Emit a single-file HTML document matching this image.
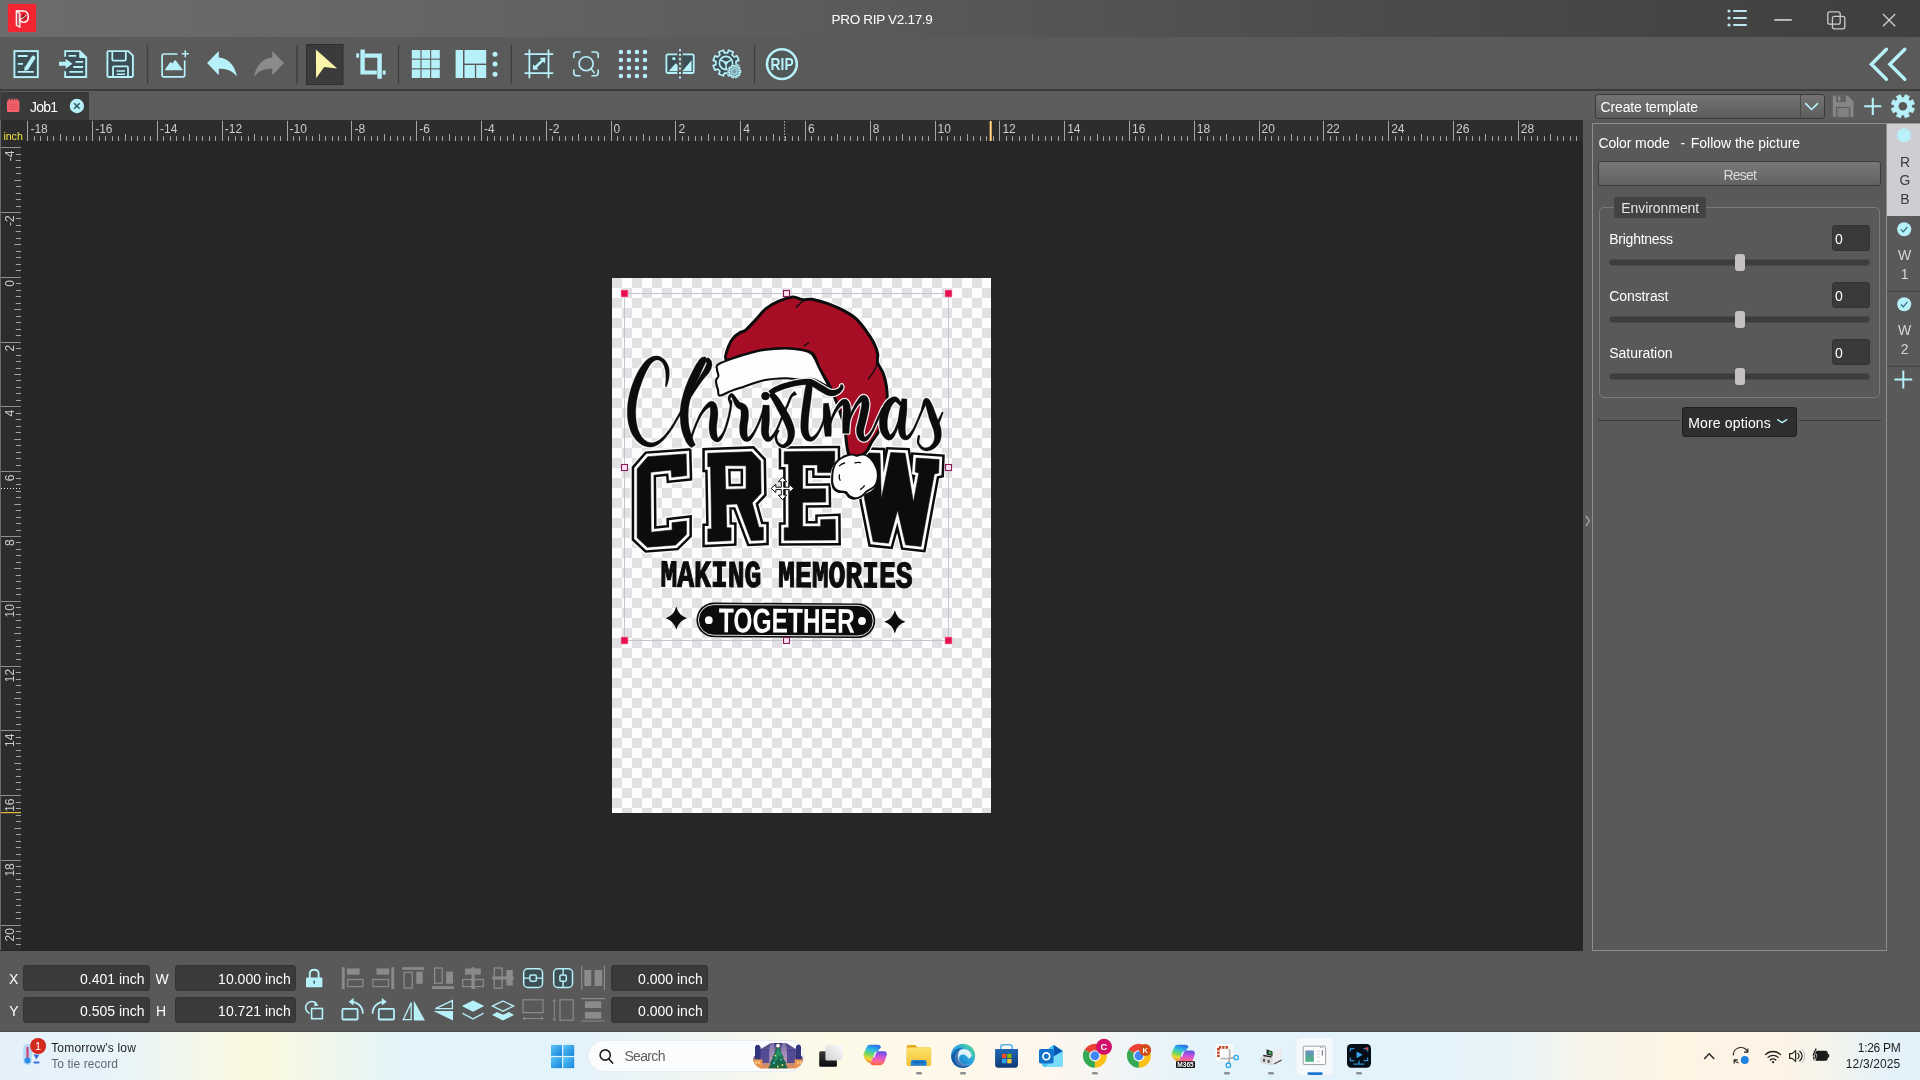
<!DOCTYPE html>
<html><head><meta charset="utf-8"><title>PRO RIP V2.17.9</title>
<style>
*{box-sizing:border-box;margin:0;padding:0}
html,body{width:1920px;height:1080px;overflow:hidden;background:#262626;font-family:"Liberation Sans",sans-serif;color:#fff}
.abs{position:absolute}
#titlebar{position:absolute;left:0;top:0;width:1920px;height:37px;background:linear-gradient(90deg,#6c6c6c 0%,#666 20%,#5a5a5a 45%,#4c4c4c 70%,#3f3f3f 100%)}
#toolbar{position:absolute;left:0;top:37px;width:1920px;height:54px;background:#5a5a5a}
#tbline{position:absolute;left:0;top:89.3px;width:1920px;height:1.5px;background:#3c3c3c}
#tabbar{position:absolute;left:0;top:91px;width:1920px;height:29px;background:#5d5d5d}
#canvas{position:absolute;left:0;top:120px;width:1583.8px;height:830.6px;background:#262626}
#panelbg{position:absolute;left:1583px;top:120px;width:337px;height:832px;background:#595959}
#bottom{position:absolute;left:0;top:950.6px;width:1920px;height:81.4px;background:#595959}
#taskbar{position:absolute;left:0;top:1032px;width:1920px;height:48px;background:linear-gradient(90deg,#e4f1fa 0%,#e8f4fa 6%,#f6f8e8 11%,#fbf9de 13.5%,#f0f7ec 17%,#e2f4f9 21%,#e3f3fb 30%,#f4f7f0 38%,#fdfae8 43%,#fef8ea 50%,#fdf6ee 55%,#eff5f7 59%,#e2f3fb 63%,#e4f3fb 75%,#eaf4f7 79%,#f8f5ea 83%,#fdf4e4 87%,#fdf4e6 93%,#f0f4f0 96%,#e3f2fa 98.5%,#e2f2fa 100%)}

#root{position:absolute;left:0;top:0;width:1920px;height:1080px;will-change:transform}

</style></head><body>
<div id="root">
<!-- titlebar -->
<div id="titlebar"></div>
<div class="abs" style="left:8px;top:4px;width:28px;height:28px;background:#f42533;box-shadow:0 0 1px #f0505a"></div>
<svg class="abs" style="left:8px;top:4px;" width="28" height="28" viewBox="0 0 28 28"><path d="M8.3 7 L8.3 21.2 L11.9 23.3 L11.9 9.4 Z" fill="#c4606a" stroke="#fff" stroke-width="1.2" stroke-linejoin="round"/><path d="M8.3 7 H15.2 Q20.3 7.1 20.3 12.7 Q20.3 18.3 15.4 18.3 Q12.6 18.3 11.9 15.6" fill="none" stroke="#fff" stroke-width="1.4" stroke-linecap="round"/><path d="M13.4 13.6 Q13.2 9.6 16.6 9.9 Q18.6 10.6 18.3 13 Q17.6 16.6 14.6 16.3 Z" fill="#9a1a26"/><path d="M12.2 15.2 Q16 14.6 18.6 10.6" stroke="#fff" stroke-width="1" fill="none"/></svg>
<div class="abs" style="left:831.50px;top:10.90px;font-size:13.5px;line-height:18px;color:#fff;white-space:pre;letter-spacing:-0.304px;">PRO RIP V2.17.9</div>
<svg class="abs" style="left:1700px;top:0px;" width="220" height="37" viewBox="1700 0 220 37"><circle cx="1729" cy="11" r="1.6" fill="#bde6f0"/><rect x="1733" y="10" width="14" height="2" rx="1" fill="#bde6f0"/><circle cx="1729" cy="18" r="1.6" fill="#bde6f0"/><rect x="1733" y="17" width="14" height="2" rx="1" fill="#bde6f0"/><circle cx="1729" cy="25" r="1.6" fill="#bde6f0"/><rect x="1733" y="24" width="14" height="2" rx="1" fill="#bde6f0"/><rect x="1774.3" y="19" width="17.5" height="1.8" fill="#c4c4c4"/><rect x="1827.8" y="11.8" width="12.4" height="12.4" rx="2" fill="none" stroke="#cacaca" stroke-width="1.3"/><rect x="1832.4" y="16.4" width="12.4" height="12.4" rx="2" fill="none" stroke="#cacaca" stroke-width="1.3"/><path d="M1883 14 L1895.2 26.2 M1895.2 14 L1883 26.2" stroke="#d0d0d0" stroke-width="1.3" fill="none"/></svg>
<!-- toolbar -->
<div id="toolbar"></div><div id="tbline"></div>
<svg class="abs" style="left:0px;top:37px;" width="1920" height="54" viewBox="0 37 1920 54"><rect x="146.9" y="45" width="1.3" height="39" fill="#3d3d3d"/><rect x="296.4" y="45" width="1.3" height="39" fill="#3d3d3d"/><rect x="397.79999999999995" y="45" width="1.3" height="39" fill="#3d3d3d"/><rect x="510.7" y="45" width="1.3" height="39" fill="#3d3d3d"/><rect x="753.8" y="45" width="1.3" height="39" fill="#3d3d3d"/><rect x="306.5" y="44.5" width="36.5" height="40" fill="#3b3b3b" stroke="#2f2f2f" stroke-width="1"/><rect x="14.4" y="51.1" width="23.4" height="26" fill="#3d4f54" stroke="#b6f1fa" stroke-width="1.9"/><path d="M17.8 56 H27.6 M17.8 63.8 H23 M17.8 71.9 H33.9" stroke="#b6f1fa" stroke-width="1.8" fill="none"/><path d="M33.4 57.6 L26.6 68.4" stroke="#b6f1fa" stroke-width="4" stroke-linecap="round" fill="none"/><path d="M24.6 66.6 L28.3 69 L24.4 71.2 Z" fill="#b6f1fa"/><path d="M65.2 56.8 V51.1 H79.8 L86.2 57.5 V77 H65.2 V71.3" fill="#3d4f54" stroke="#b6f1fa" stroke-width="1.9" stroke-linejoin="miter"/><path d="M79.8 51.1 V57.5 H86.2" fill="#b6f1fa" stroke="#b6f1fa" stroke-width="1" /><path d="M59 61.8 H65.6 V58.8 L72.4 63.8 L65.6 68.8 V65.8 H59 Z" fill="#b6f1fa"/><path d="M68.5 55.8 H76.2 M75.5 61.9 H83.1 M73.3 67 H83.1 M69.3 71.9 H83.1" stroke="#b6f1fa" stroke-width="1.8" fill="none"/><path d="M108.6 51.1 H128.3 L132.9 55.7 V75.8 Q132.9 77 131.7 77 H108.6 Q107.4 77 107.4 75.8 V52.3 Q107.4 51.1 108.6 51.1 Z" fill="#3d4f54" stroke="#b6f1fa" stroke-width="1.9"/><path d="M112.3 51.1 V59.6 Q112.3 60.6 113.3 60.6 H124.8 Q125.8 60.6 125.8 59.6 V51.1" fill="none" stroke="#b6f1fa" stroke-width="1.8"/><path d="M113 77 V67.4 Q113 66.4 114 66.4 H127 Q128 66.4 128 67.4 V77" fill="none" stroke="#b6f1fa" stroke-width="1.8"/><path d="M116.6 71.1 H125 M116.6 74.3 H125" stroke="#b6f1fa" stroke-width="1.5" fill="none"/><path d="M176.9 54 H164 Q162.1 54 162.1 55.9 V74.9 Q162.1 76.8 164 76.8 H182.8 Q184.7 76.8 184.7 74.9 V61.1" fill="none" stroke="#b6f1fa" stroke-width="1.7" stroke-linecap="round"/><path d="M181.8 53.7 H188.8 M185.3 50.2 V57.2" stroke="#b6f1fa" stroke-width="1.5" fill="none"/><path d="M165.6 70.3 Q164.4 70.3 165.2 69.2 L170 62.6 Q170.7 61.8 171.6 62.6 L172.5 63.4 L174.4 60.6 Q175.1 59.8 175.8 60.6 L182.4 69.2 Q183.2 70.3 182 70.3 Z" fill="#b6f1fa"/><path d="M207.1 63.1 L218.8 50.9 L218.8 57.5 C228.5 58 235.3 66 236.9 76.6 C232 70.4 226 68.8 218.8 68.8 L218.8 75.2 Z" fill="#b6f1fa"/><path d="M284 63.1 L272.3 50.9 L272.3 57.5 C262.6 58 255.8 66 254.2 76.6 C259.1 70.4 265.1 68.8 272.3 68.8 L272.3 75.2 Z" fill="#8b8b8b"/><path d="M315.9 49.6 L337.2 68.6 L324.2 67.1 L316.1 78.3 Z" fill="#fbf5aa"/><path d="M360.4 49.4 H364.8 V70.5 H376.8 V74.6 H360.4 Z" fill="#b6f1fa"/><path d="M364.8 53.4 H381.8 V78.8 H377.3 V57.7 H364.8 Z" fill="#b6f1fa"/><rect x="356.2" y="53.4" width="2.9" height="4.3" fill="#b6f1fa"/><rect x="382.7" y="70.5" width="3" height="4.1" fill="#b6f1fa"/><rect x="411.8" y="50.0" width="8.6" height="8.6" fill="#b6f1fa"/><rect x="421.5" y="50.0" width="8.6" height="8.6" fill="#b6f1fa"/><rect x="431.2" y="50.0" width="8.6" height="8.6" fill="#b6f1fa"/><rect x="411.8" y="59.7" width="8.6" height="8.6" fill="#b6f1fa"/><rect x="421.5" y="59.7" width="8.6" height="8.6" fill="#b6f1fa"/><rect x="431.2" y="59.7" width="8.6" height="8.6" fill="#b6f1fa"/><rect x="411.8" y="69.4" width="8.6" height="8.6" fill="#b6f1fa"/><rect x="421.5" y="69.4" width="8.6" height="8.6" fill="#b6f1fa"/><rect x="431.2" y="69.4" width="8.6" height="8.6" fill="#b6f1fa"/><rect x="455.6" y="50" width="7.4" height="28" fill="#b6f1fa"/><rect x="464.5" y="50" width="21.7" height="13.6" fill="#b6f1fa"/><rect x="464.5" y="65" width="10.4" height="13" fill="#b6f1fa"/><rect x="476.2" y="65" width="10" height="13" fill="#b6f1fa"/><circle cx="495" cy="54.3" r="2.5" fill="#b6f1fa"/><circle cx="495" cy="64" r="2.5" fill="#b6f1fa"/><circle cx="495" cy="74.2" r="2.5" fill="#b6f1fa"/><rect x="529.4" y="54.2" width="19.1" height="19" fill="#3d4f54" fill-opacity="0.55"/><path d="M529.4 50.2 V77.6 M548.5 50.2 V77.6 M525.2 54.2 H552.6 M525.2 73.2 H552.6" stroke="#b6f1fa" stroke-width="1.8" stroke-linecap="round" fill="none"/><path d="M535.5 67.2 L542.6 60.4" stroke="#b6f1fa" stroke-width="2.6" fill="none"/><path d="M545.4 57.6 L545 63.4 L539.6 58 Z M532.8 69.8 L533.2 64.2 L538.6 69.6 Z" fill="#b6f1fa"/><path d="M573.8 57.5 V55 Q573.8 52 576.8 52 H580 M592 52 H595.2 Q598.2 52 598.2 55 V57.5 M598.2 70 V72.7 Q598.2 75.7 595.2 75.7 H592 M580 75.7 H576.8 Q573.8 75.7 573.8 72.7 V70" stroke="#b6f1fa" stroke-width="1.6" fill="none" stroke-linecap="round"/><circle cx="586.1" cy="63.7" r="7" fill="#3d4f54" fill-opacity="0.12" stroke="#b6f1fa" stroke-width="1.6"/><path d="M591.1 68.8 L594.3 72.9" stroke="#b6f1fa" stroke-width="1.5" stroke-linecap="round"/><circle cx="620.90" cy="52.00" r="2.25" fill="#b6f1fa"/><circle cx="628.93" cy="52.00" r="2.25" fill="#b6f1fa"/><circle cx="636.96" cy="52.00" r="2.25" fill="#b6f1fa"/><circle cx="644.99" cy="52.00" r="2.25" fill="#b6f1fa"/><circle cx="620.90" cy="59.97" r="2.25" fill="#b6f1fa"/><circle cx="628.93" cy="59.97" r="2.25" fill="#b6f1fa"/><circle cx="636.96" cy="59.97" r="2.25" fill="#b6f1fa"/><circle cx="644.99" cy="59.97" r="2.25" fill="#b6f1fa"/><circle cx="620.90" cy="67.94" r="2.25" fill="#b6f1fa"/><circle cx="628.93" cy="67.94" r="2.25" fill="#b6f1fa"/><circle cx="636.96" cy="67.94" r="2.25" fill="#b6f1fa"/><circle cx="644.99" cy="67.94" r="2.25" fill="#b6f1fa"/><circle cx="620.90" cy="75.91" r="2.25" fill="#b6f1fa"/><circle cx="628.93" cy="75.91" r="2.25" fill="#b6f1fa"/><circle cx="636.96" cy="75.91" r="2.25" fill="#b6f1fa"/><circle cx="644.99" cy="75.91" r="2.25" fill="#b6f1fa"/><path d="M677.3 54.4 H668 Q666.4 54.4 666.4 56 V71.4 Q666.4 73 668 73 H677.3 M682.7 54.4 H692.1 Q693.7 54.4 693.7 56 V71.4 Q693.7 73 692.1 73 H682.7" fill="#3d4f54" stroke="#b6f1fa" stroke-width="1.8"/><path d="M668.6 71.3 L675.7 63.2 L677.6 65.3 V71.3 Z M682.2 71.3 L691.6 60.2 V71.3 Z" fill="#b6f1fa"/><circle cx="673.9" cy="58.6" r="1.7" fill="#b6f1fa"/><path d="M680 49.2 V78.6" stroke="#b6f1fa" stroke-width="2" stroke-dasharray="2 2.55" fill="none"/><path d="M738.83 65.66 L736.95 70.19 L734.25 69.00 L732.00 71.25 L733.19 73.95 L728.66 75.83 L727.60 73.07 L724.40 73.07 L723.34 75.83 L718.81 73.95 L720.00 71.25 L717.75 69.00 L715.05 70.19 L713.17 65.66 L715.93 64.60 L715.93 61.40 L713.17 60.34 L715.05 55.81 L717.75 57.00 L720.00 54.75 L718.81 52.05 L723.34 50.17 L724.40 52.93 L727.60 52.93 L728.66 50.17 L733.19 52.05 L732.00 54.75 L734.25 57.00 L736.95 55.81 L738.83 60.34 L736.07 61.40 L736.07 64.60Z" fill="#3d4f54" stroke="#b6f1fa" stroke-width="1.7" stroke-linejoin="round"/><circle cx="726" cy="63" r="6.6" fill="none" stroke="#b6f1fa" stroke-width="1.6"/><circle cx="726" cy="63" r="1.7" fill="#b6f1fa"/><path d="M726 63 L726 69.6 M726 63 L720.4 59.6 M726 63 L731.6 59.6" stroke="#b6f1fa" stroke-width="1.5" fill="none"/><circle cx="734.4" cy="71.4" r="7.2" fill="#5a5a5a"/><path d="M740.72 70.40 L740.72 72.40 L739.21 72.35 L738.85 73.46 L740.10 74.31 L738.93 75.93 L737.73 74.99 L736.79 75.68 L737.31 77.10 L735.40 77.72 L734.98 76.27 L733.82 76.27 L733.40 77.72 L731.49 77.10 L732.01 75.68 L731.07 74.99 L729.87 75.93 L728.70 74.31 L729.95 73.46 L729.59 72.35 L728.08 72.40 L728.08 70.40 L729.59 70.45 L729.95 69.34 L728.70 68.49 L729.87 66.87 L731.07 67.81 L732.01 67.12 L731.49 65.70 L733.40 65.08 L733.82 66.53 L734.98 66.53 L735.40 65.08 L737.31 65.70 L736.79 67.12 L737.73 67.81 L738.93 66.87 L740.10 68.49 L738.85 69.34 L739.21 70.45Z" fill="#74a0a8" stroke="#b6f1fa" stroke-width="1.2" stroke-linejoin="round"/><circle cx="734.4" cy="71.4" r="2.8" fill="none" stroke="#b6f1fa" stroke-width="1"/><circle cx="781.9" cy="64.1" r="14.9" fill="#3d4f54" fill-opacity="0.25" stroke="#b6f1fa" stroke-width="2.6"/><text x="782.1" y="69.9" font-family="Liberation Sans" font-weight="bold" font-size="16.2" fill="#b6f1fa" text-anchor="middle" textLength="23" lengthAdjust="spacingAndGlyphs">RIP</text><path d="M1886.4 49.2 L1871.4 64.2 L1886.4 79.2 M1904.8 49.2 L1889.8 64.2 L1904.8 79.2" stroke="#b6f1fa" stroke-width="3.4" stroke-linecap="round" stroke-linejoin="miter" fill="none"/></svg>
<!-- tabs -->
<div id="tabbar"></div>
<div class="abs" style="left:1px;top:92px;width:88px;height:28px;background:#3a3a3a;"></div>
<div class="abs" style="left:0px;top:91px;width:1px;height:29px;background:#444;"></div>
<svg class="abs" style="left:0px;top:91px;" width="100" height="30" viewBox="0 91 100 30"><rect x="7" y="100.2" width="12.4" height="11.8" rx="1.6" fill="#f0626b"/><rect x="8.5" y="98.6" width="1.4" height="3" rx="0.6" fill="#f0626b"/><rect x="11.200000000000001" y="98.6" width="1.4" height="3" rx="0.6" fill="#f0626b"/><rect x="13.9" y="98.6" width="1.4" height="3" rx="0.6" fill="#f0626b"/><rect x="16.6" y="98.6" width="1.4" height="3" rx="0.6" fill="#f0626b"/><path d="M9 104.2 H17.4 M9 106.6 H17.4 M9 109 H17.4" stroke="#e24852" stroke-width="0.9" fill="none"/><circle cx="76.9" cy="106" r="7.2" fill="#b6f1fa"/><path d="M74.1 103.2 L79.7 108.8 M79.7 103.2 L74.1 108.8" stroke="#2c5560" stroke-width="1.5" fill="none"/></svg>
<div class="abs" style="left:30.00px;top:97.60px;font-size:14px;line-height:18px;color:#fff;white-space:pre;letter-spacing:-0.790px;">Job1</div>
<!-- canvas -->
<div id="canvas"></div>
<div class="abs" style="left:612px;top:278px;width:379px;height:535px;background-color:#fdfcfe;background-image:conic-gradient(#e1e0e3 25%,transparent 0 50%,#e1e0e3 0 75%,transparent 0);background-size:20px 20px;background-position:-10px 0;"></div>
<svg class="abs" style="left:612px;top:278px;" width="379" height="535" viewBox="612 278 379 535"><defs><g id="scr"><path d="M666.6 386.8L666.8 386.1L667.1 385.1L667.5 384.0L667.9 382.6L668.3 381.2L668.6 379.8L668.9 378.4L669.1 377.0L669.2 375.7L669.3 374.5L669.3 373.1L669.3 371.8L669.2 370.5L669.1 369.3L668.9 368.0L668.6 366.8L668.2 365.7L667.7 364.6L667.2 363.5L666.6 362.5L666.0 361.5L665.3 360.7L664.6 359.8L663.8 359.1L663.0 358.5L662.2 357.9L661.3 357.3L660.4 356.8L659.3 356.4L658.3 356.1L657.1 356.0L656.0 356.0L654.8 356.1L653.7 356.3L652.5 356.6L651.2 357.1L649.9 357.7L648.6 358.4L647.3 359.4L646.0 360.6L644.7 362.0L643.4 363.5L642.1 365.2L640.9 367.1L639.6 369.0L638.4 371.1L637.2 373.2L636.1 375.4L635.1 377.6L634.1 380.0L633.1 382.5L632.2 385.0L631.3 387.6L630.5 390.2L629.8 392.7L629.2 395.2L628.7 397.7L628.3 400.1L627.9 402.5L627.6 404.9L627.4 407.3L627.3 409.7L627.3 412.1L627.3 414.4L627.4 416.6L627.7 418.9L628.0 421.2L628.4 423.4L628.9 425.5L629.5 427.6L630.1 429.6L630.8 431.5L631.6 433.3L632.5 435.0L633.5 436.6L634.6 438.1L635.7 439.6L636.8 440.8L638.1 442.0L639.3 443.1L640.6 444.0L642.0 444.9L643.4 445.6L644.9 446.2L646.4 446.6L647.9 446.9L649.4 447.1L650.9 447.1L652.3 446.9L653.7 446.6L655.1 446.1L656.4 445.5L657.7 444.7L658.9 443.9L660.2 443.0L661.4 442.0L662.6 441.0L663.8 439.8L665.0 438.5L666.2 437.1L667.4 435.6L668.6 434.1L669.8 432.5L670.9 430.8L672.1 429.1L673.3 427.2L674.5 425.2L675.6 423.2L676.8 421.1L678.0 419.0L679.2 416.9L680.5 414.7L681.8 412.6L683.1 410.3L684.5 408.0L685.9 405.7L687.3 403.4L688.7 401.1L690.1 398.9L691.4 396.8L692.8 394.7L694.1 392.6L695.5 390.5L696.8 388.5L698.2 386.5L699.4 384.7L700.7 382.9L701.8 381.3L703.0 379.8L704.1 378.5L705.1 377.3L706.2 376.1L707.2 374.9L708.1 373.8L709.0 372.7L709.7 371.5L710.4 370.3L710.9 369.2L711.3 368.2L711.6 367.1L711.8 366.0L712.0 365.0L712.0 364.0L711.9 362.9L711.6 361.7L711.1 360.6L710.5 359.7L709.8 359.0L709.2 358.4L708.7 358.0L708.3 357.7L708.1 357.4L704.9 359.8L705.1 360.3L705.5 360.8L705.8 361.3L706.2 361.9L706.4 362.4L706.6 362.8L706.6 363.1L706.6 363.4L706.5 363.7L706.4 364.2L706.2 364.7L706.0 365.3L705.7 366.0L705.3 366.8L704.9 367.7L704.5 368.6L704.0 369.5L703.4 370.6L702.7 371.7L702.0 373.0L701.1 374.3L700.2 375.8L699.3 377.3L698.3 379.0L697.3 380.8L696.3 382.7L695.1 384.7L694.0 386.8L692.8 388.9L691.6 391.1L690.4 393.3L689.2 395.5L687.9 397.7L686.6 399.9L685.3 402.3L684.0 404.6L682.7 407.0L681.4 409.3L680.0 411.5L678.8 413.7L677.5 415.9L676.3 418.0L675.1 420.1L673.9 422.2L672.7 424.2L671.5 426.1L670.4 427.9L669.2 429.6L667.9 431.1L666.7 432.7L665.5 434.1L664.3 435.4L663.1 436.7L661.9 437.8L660.7 438.8L659.6 439.7L658.4 440.4L657.2 441.1L656.1 441.7L654.9 442.1L653.9 442.4L652.8 442.6L651.8 442.7L650.9 442.7L649.9 442.5L649.0 442.3L647.9 441.9L646.9 441.4L646.0 440.8L645.0 440.2L644.1 439.4L643.3 438.6L642.5 437.7L641.7 436.7L641.0 435.6L640.3 434.4L639.6 433.1L639.0 431.8L638.4 430.3L637.9 428.9L637.5 427.3L637.1 425.6L636.7 423.8L636.4 422.0L636.1 420.0L635.9 418.1L635.8 416.1L635.7 414.1L635.7 412.1L635.7 410.0L635.9 407.9L636.1 405.8L636.3 403.6L636.6 401.4L637.0 399.2L637.4 397.0L637.9 394.8L638.5 392.4L639.2 390.0L640.0 387.6L640.8 385.2L641.6 382.9L642.4 380.6L643.3 378.5L644.1 376.5L645.0 374.5L645.9 372.5L646.9 370.6L647.8 368.8L648.7 367.2L649.6 365.8L650.5 364.5L651.3 363.6L652.0 362.7L652.7 362.0L653.5 361.4L654.2 360.9L655.0 360.5L655.7 360.2L656.5 360.0L657.1 359.9L657.7 359.9L658.3 360.0L658.9 360.2L659.6 360.5L660.2 360.9L660.8 361.3L661.4 361.8L661.9 362.3L662.4 362.9L662.9 363.6L663.3 364.4L663.7 365.3L664.1 366.1L664.4 367.0L664.7 367.9L665.0 368.9L665.2 369.9L665.4 371.0L665.5 372.1L665.7 373.3L665.8 374.5L665.8 375.7L665.9 376.9L665.9 378.1L665.9 379.4L665.8 380.8L665.7 382.3L665.6 383.6L665.5 384.8L665.5 385.9L665.4 386.6Z"/><path d="M705.7 357.0L705.5 357.0L705.2 356.9L704.6 356.8L703.8 356.9L702.7 357.1L701.6 357.7L700.4 358.5L699.4 359.6L698.4 360.9L697.4 362.4L696.3 364.0L695.3 365.8L694.3 367.7L693.2 369.7L692.2 371.7L691.3 373.6L690.4 375.5L689.4 377.5L688.5 379.6L687.6 381.7L686.7 383.9L685.8 386.1L685.0 388.4L684.3 390.6L683.6 392.8L683.0 395.0L682.4 397.2L681.8 399.4L681.3 401.7L680.9 404.0L680.6 406.2L680.3 408.5L680.2 410.8L680.1 413.1L680.1 415.4L680.1 417.8L680.3 420.0L680.4 422.3L680.7 424.4L681.0 426.6L681.4 428.7L681.9 430.8L682.5 432.8L683.1 434.7L683.8 436.6L684.5 438.3L685.2 439.8L685.8 441.3L686.6 442.6L687.4 443.8L688.3 444.9L689.1 445.8L689.9 446.5L690.6 447.1L691.1 447.5L691.4 447.8L695.5 444.9L695.2 444.4L694.9 443.7L694.5 442.9L694.1 442.1L693.7 441.3L693.3 440.4L693.0 439.4L692.6 438.3L692.2 437.0L691.7 435.5L691.1 434.0L690.6 432.3L690.1 430.6L689.6 428.8L689.2 427.1L688.9 425.3L688.7 423.5L688.5 421.5L688.4 419.5L688.3 417.5L688.2 415.4L688.3 413.3L688.4 411.3L688.5 409.3L688.7 407.3L689.0 405.3L689.4 403.3L689.8 401.2L690.3 399.2L690.8 397.2L691.4 395.1L692.1 393.1L692.7 391.1L693.5 389.1L694.4 387.1L695.3 385.1L696.2 383.0L697.1 381.0L698.0 379.1L698.9 377.1L699.7 375.2L700.6 373.2L701.5 371.3L702.3 369.4L703.1 367.7L703.9 366.1L704.6 364.7L705.1 363.6L705.4 363.0L705.6 362.5L705.7 362.2L705.8 361.9L706.0 361.6L706.3 361.3L706.9 361.0L707.3 360.7Z"/><path d="M691.2 441.2L691.6 440.2L692.0 438.9L692.4 437.3L693.0 435.6L693.5 433.8L694.2 432.0L694.8 430.1L695.5 428.4L696.2 426.7L696.9 424.9L697.7 423.1L698.6 421.3L699.4 419.5L700.3 417.8L701.1 416.2L702.0 414.8L702.8 413.6L703.7 412.4L704.5 411.4L705.4 410.4L706.3 409.6L707.1 408.9L707.9 408.3L708.6 407.8L709.3 407.4L710.0 407.1L710.6 406.9L711.1 406.8L711.3 406.9L711.2 407.1L710.7 407.1L710.2 406.9L710.0 406.8L710.0 407.1L710.1 407.7L710.2 408.6L710.3 409.6L710.3 410.7L710.3 412.0L710.3 413.2L710.3 414.5L710.1 416.0L709.9 417.7L709.7 419.5L709.4 421.4L709.2 423.3L709.1 425.2L709.1 426.9L709.1 428.5L709.2 430.0L709.4 431.5L709.6 432.9L709.9 434.3L710.2 435.5L710.7 436.8L711.2 437.9L711.9 438.9L712.7 439.8L713.5 440.6L714.5 441.2L715.6 441.7L716.8 441.9L718.1 441.9L719.3 441.4L720.3 440.7L721.0 439.8L721.7 438.9L722.4 437.8L723.0 436.6L723.6 435.4L724.3 434.1L724.8 432.8L725.4 431.4L726.0 429.9L726.5 428.3L727.1 426.6L727.6 424.9L728.1 423.2L728.6 421.5L729.1 419.8L729.5 418.1L729.9 416.4L730.3 414.7L730.6 413.0L731.0 411.3L731.3 409.7L731.5 408.2L731.7 406.9L731.9 405.7L732.0 404.6L732.1 403.6L732.1 402.8L732.1 402.0L732.1 401.3L732.1 400.8L732.1 400.4L729.9 400.4L729.9 400.8L729.9 401.4L729.9 402.1L730.0 402.8L730.0 403.6L730.0 404.5L729.9 405.5L729.8 406.6L729.6 407.9L729.3 409.3L729.0 410.9L728.7 412.6L728.4 414.3L728.0 416.0L727.6 417.7L727.1 419.3L726.7 420.9L726.2 422.6L725.7 424.3L725.2 426.0L724.6 427.6L724.1 429.2L723.5 430.6L722.8 431.9L722.2 433.0L721.5 434.1L720.7 435.2L720.0 436.1L719.2 436.8L718.6 437.4L718.0 437.7L717.7 437.7L717.7 437.6L717.7 437.4L717.7 437.3L717.6 437.0L717.5 436.7L717.3 436.3L717.2 435.8L717.1 435.3L717.0 434.7L716.9 434.0L716.8 433.1L716.7 432.0L716.7 430.9L716.6 429.7L716.6 428.4L716.7 427.1L716.7 425.7L716.9 424.1L717.1 422.4L717.4 420.5L717.6 418.6L717.8 416.7L717.9 414.9L717.9 413.1L717.8 411.6L717.7 410.1L717.5 408.7L717.2 407.3L716.8 406.0L716.4 404.7L715.7 403.5L714.7 402.4L713.3 401.5L711.7 401.3L710.3 401.5L709.2 402.0L708.3 402.6L707.5 403.2L706.8 404.0L706.0 404.7L705.3 405.5L704.6 406.4L703.8 407.4L703.0 408.5L702.2 409.7L701.5 410.9L700.7 412.2L699.9 413.6L699.1 415.1L698.3 416.8L697.5 418.6L696.7 420.4L695.8 422.3L695.1 424.1L694.3 426.0L693.6 427.7L693.0 429.5L692.3 431.3L691.7 433.2L691.1 435.0L690.5 436.7L690.1 438.3L689.6 439.6L689.3 440.5Z"/><path d="M731.9 404.3L731.8 403.8L731.5 403.1L731.2 402.2L730.9 401.3L730.7 400.4L730.5 399.5L730.4 398.8L730.4 398.3L730.5 397.9L730.6 397.5L730.9 397.1L731.2 396.7L731.4 396.4L731.7 396.3L731.7 396.3L731.4 396.3L731.1 396.3L731.1 396.4L731.3 396.7L731.5 397.1L731.8 397.7L732.1 398.4L732.4 399.1L732.8 399.8L733.1 400.5L733.4 401.3L733.7 402.1L734.0 403.0L734.4 403.9L734.9 404.9L735.4 405.8L736.1 406.8L737.1 407.7L738.1 408.4L739.0 408.8L739.8 409.2L740.4 409.5L740.6 409.7L740.7 409.7L740.6 409.8L740.7 410.0L740.8 410.4L740.9 410.9L741.0 411.5L741.0 412.3L741.0 413.1L741.0 414.1L741.0 415.2L740.9 416.3L740.8 417.7L740.5 419.3L740.3 421.0L740.0 422.8L739.7 424.5L739.6 426.3L739.5 428.0L739.6 429.5L739.7 431.0L739.8 432.4L740.0 433.8L740.3 435.1L740.7 436.3L741.2 437.5L741.8 438.6L742.6 439.6L743.5 440.4L744.5 441.0L745.6 441.4L746.8 441.5L748.0 441.4L749.1 441.0L750.1 440.4L750.9 439.7L751.7 438.8L752.3 437.8L753.0 436.8L753.7 435.6L754.3 434.4L755.0 433.1L755.7 431.8L756.4 430.4L757.1 428.8L757.9 427.2L758.7 425.5L759.5 423.8L760.2 422.0L760.9 420.4L761.5 418.8L762.1 417.3L762.6 415.7L763.1 414.2L763.6 412.6L764.0 411.2L764.4 410.0L764.7 408.9L764.9 408.1L763.0 407.5L762.8 408.4L762.5 409.4L762.1 410.7L761.7 412.1L761.2 413.6L760.7 415.1L760.2 416.6L759.6 418.1L759.0 419.6L758.4 421.3L757.6 423.0L756.9 424.7L756.1 426.3L755.3 427.9L754.5 429.4L753.8 430.7L753.0 431.9L752.2 433.0L751.4 434.1L750.6 435.0L749.9 435.8L749.1 436.4L748.5 436.8L748.1 437.0L747.8 437.0L747.6 436.8L747.5 436.7L747.5 436.5L747.5 436.3L747.5 436.1L747.4 435.9L747.4 435.6L747.4 435.2L747.3 434.6L747.2 433.8L747.1 432.8L747.1 431.8L747.1 430.6L747.1 429.4L747.1 428.2L747.2 426.9L747.4 425.5L747.6 423.9L747.9 422.2L748.1 420.4L748.4 418.7L748.5 417.0L748.6 415.4L748.6 414.0L748.5 412.8L748.4 411.6L748.2 410.4L748.0 409.3L747.6 408.1L747.1 407.0L746.4 405.9L745.4 404.8L744.3 403.9L743.2 403.4L742.2 403.1L741.5 402.8L740.9 402.7L740.6 402.6L740.3 402.5L739.9 402.2L739.4 401.8L738.9 401.2L738.4 400.5L737.8 399.8L737.3 399.1L736.7 398.4L736.2 397.7L735.7 397.1L735.3 396.6L734.9 396.0L734.4 395.3L734.0 394.7L733.4 394.2L732.8 393.7L731.8 393.3L730.8 393.5L730.1 394.0L729.5 394.5L729.0 395.1L728.6 395.8L728.3 396.5L728.1 397.3L728.0 398.2L728.0 399.1L728.2 400.0L728.5 401.0L728.9 402.0L729.2 402.9L729.6 403.8L729.8 404.5L730.0 405.0Z"/><path d="M762.9 405.1L762.8 406.2L762.7 407.7L762.6 409.5L762.4 411.5L762.3 413.5L762.1 415.6L762.0 417.6L761.9 419.4L761.8 421.0L761.6 422.7L761.5 424.4L761.4 426.1L761.3 427.8L761.2 429.5L761.2 431.1L761.4 432.6L761.6 434.1L761.9 435.3L762.4 436.5L762.9 437.6L763.5 438.6L764.1 439.5L764.9 440.3L765.8 440.9L766.8 441.4L767.9 441.6L769.0 441.5L770.0 441.2L770.8 440.7L771.5 440.1L772.2 439.5L772.8 438.7L773.4 437.9L774.1 436.9L774.7 435.9L775.3 434.8L776.0 433.6L776.6 432.3L777.3 431.0L778.0 429.6L778.7 428.0L779.4 426.4L780.2 424.6L780.9 422.7L781.7 420.8L782.5 419.0L783.2 417.3L783.9 415.7L784.5 414.1L785.2 412.6L785.9 411.0L786.6 409.5L787.2 408.1L787.8 406.9L788.3 405.9L788.6 405.1L786.8 404.2L786.5 405.0L786.0 406.1L785.4 407.3L784.8 408.7L784.1 410.2L783.4 411.7L782.7 413.3L782.0 414.9L781.3 416.5L780.6 418.3L779.9 420.1L779.1 422.0L778.4 423.8L777.6 425.6L776.9 427.2L776.2 428.7L775.5 430.0L774.7 431.3L774.0 432.5L773.3 433.6L772.6 434.6L771.9 435.4L771.3 436.1L770.7 436.6L770.1 436.9L769.6 437.1L769.2 437.1L768.9 437.1L768.8 436.9L768.9 436.7L769.1 436.6L769.2 436.5L769.3 436.4L769.2 436.1L769.2 435.7L769.1 435.2L768.9 434.5L768.9 433.8L768.8 432.9L768.7 432.0L768.7 431.0L768.8 429.7L768.9 428.3L769.0 426.7L769.2 425.1L769.3 423.3L769.4 421.5L769.5 419.7L769.5 417.9L769.5 415.8L769.5 413.7L769.4 411.7L769.4 409.7L769.4 407.9L769.3 406.4L769.3 405.3Z"/><path d="M768.7 395.2L769.0 395.6L769.4 396.1L769.8 396.6L770.3 397.2L770.7 397.8L771.2 398.5L771.7 399.3L772.2 400.1L772.7 401.0L773.3 402.1L773.9 403.2L774.6 404.4L775.3 405.7L776.0 407.0L776.7 408.3L777.4 409.7L778.2 411.1L779.0 412.5L779.8 414.0L780.6 415.4L781.4 416.9L782.1 418.4L782.8 419.8L783.5 421.2L784.1 422.6L784.8 424.0L785.4 425.5L786.0 426.9L786.5 428.2L786.9 429.5L787.3 430.6L787.5 431.7L787.7 432.8L787.8 433.9L787.9 434.9L787.9 436.0L787.8 437.0L787.7 438.0L787.5 438.9L787.3 439.6L787.0 440.4L786.6 441.2L786.1 441.9L785.6 442.6L785.0 443.3L784.4 443.8L783.9 444.2L783.5 444.4L783.1 444.5L782.6 444.6L782.0 444.5L781.3 444.3L780.7 443.9L780.0 443.6L779.5 443.1L779.0 442.7L778.6 442.2L778.2 441.5L777.8 440.8L777.5 439.9L777.3 439.1L777.1 438.2L777.0 437.4L777.0 436.7L777.0 436.0L777.3 435.2L777.6 434.3L778.0 433.4L778.4 432.6L778.8 431.8L779.2 431.2L779.4 430.6L777.6 429.8L777.4 430.2L777.0 430.8L776.6 431.6L776.1 432.5L775.7 433.4L775.2 434.5L774.9 435.5L774.8 436.5L774.8 437.5L774.8 438.5L775.0 439.6L775.3 440.6L775.6 441.6L776.0 442.6L776.4 443.5L777.0 444.3L777.6 445.1L778.3 445.8L779.1 446.4L780.0 447.0L781.0 447.4L782.0 447.8L783.1 448.0L784.2 447.9L785.4 447.7L786.4 447.2L787.5 446.6L788.5 445.9L789.5 445.1L790.5 444.2L791.4 443.2L792.1 442.0L792.8 440.9L793.3 439.6L793.8 438.3L794.2 436.9L794.5 435.5L794.6 434.0L794.7 432.4L794.7 430.8L794.4 429.2L794.1 427.5L793.7 425.9L793.1 424.2L792.5 422.6L791.9 421.0L791.3 419.5L790.6 417.9L789.9 416.4L789.1 414.8L788.2 413.2L787.3 411.7L786.4 410.2L785.5 408.7L784.7 407.3L783.9 406.0L783.0 404.7L782.2 403.4L781.4 402.1L780.6 400.8L779.8 399.6L779.0 398.5L778.2 397.4L777.4 396.4L776.6 395.5L775.8 394.7L775.1 393.9L774.3 393.3L773.7 392.8L773.1 392.3L772.7 392.0L772.4 391.7Z"/><path d="M788.7 405.0L789.0 404.3L789.3 403.4L789.8 402.2L790.3 401.0L790.8 399.7L791.4 398.5L791.9 397.5L792.5 396.8L792.9 396.3L793.5 395.9L794.1 395.6L794.7 395.4L795.2 395.2L795.8 395.0L796.4 394.8L796.8 394.6L794.7 391.2L794.4 391.5L794.1 391.7L793.6 392.1L793.0 392.6L792.3 393.2L791.7 393.8L791.0 394.6L790.5 395.4L789.9 396.4L789.4 397.6L788.9 398.9L788.4 400.2L787.9 401.5L787.4 402.6L787.1 403.6L786.8 404.3Z"/><path d="M771.4 395.2L771.9 394.9L772.5 394.5L773.2 394.1L774.0 393.6L774.8 393.1L775.7 392.6L776.6 392.1L777.5 391.6L778.6 391.2L779.7 390.7L781.0 390.2L782.3 389.7L783.6 389.2L785.0 388.7L786.4 388.3L787.8 387.9L789.3 387.4L790.8 387.1L792.4 386.7L794.0 386.3L795.6 386.0L797.2 385.7L798.7 385.5L800.2 385.3L801.6 385.1L803.0 384.9L804.3 384.8L805.5 384.8L806.6 384.8L807.7 384.8L808.7 385.0L809.7 385.2L810.6 385.5L811.6 386.0L812.6 386.5L813.7 387.2L814.8 388.0L816.0 388.8L817.2 389.6L818.5 390.4L819.6 391.1L820.8 391.8L822.1 392.5L823.4 393.3L824.7 394.0L826.0 394.7L827.4 395.3L828.9 395.7L830.3 395.9L831.6 396.0L832.9 395.9L834.1 395.7L835.2 395.4L836.3 395.0L837.2 394.6L838.1 394.1L839.1 393.6L839.9 392.9L840.7 392.1L841.3 391.3L841.9 390.6L842.4 389.8L842.8 389.1L843.1 388.4L843.3 387.5L843.3 386.7L843.1 386.0L842.9 385.4L842.6 385.0L842.4 384.7L842.2 384.5L842.1 384.3L840.2 384.9L840.2 385.2L840.3 385.6L840.4 385.9L840.4 386.2L840.4 386.5L840.3 386.7L840.2 386.8L840.1 386.8L839.8 387.1L839.4 387.5L838.9 387.9L838.3 388.4L837.7 388.8L837.2 389.1L836.6 389.4L836.1 389.6L835.4 389.7L834.7 389.9L834.0 390.0L833.3 390.1L832.5 390.1L831.8 390.0L831.1 389.9L830.4 389.7L829.7 389.4L828.8 389.0L827.7 388.4L826.6 387.8L825.4 387.1L824.2 386.3L822.9 385.5L821.6 384.8L820.5 384.2L819.4 383.5L818.2 382.7L817.0 382.0L815.7 381.2L814.3 380.5L812.8 379.8L811.2 379.4L809.7 379.1L808.1 378.9L806.7 378.9L805.2 379.0L803.8 379.1L802.3 379.3L800.9 379.5L799.4 379.7L797.9 380.0L796.2 380.3L794.5 380.6L792.8 381.0L791.1 381.4L789.5 381.8L787.8 382.2L786.3 382.7L784.8 383.1L783.3 383.6L781.8 384.1L780.4 384.6L779.0 385.1L777.7 385.7L776.4 386.2L775.2 386.8L774.1 387.3L773.0 388.0L772.0 388.6L771.1 389.2L770.3 389.8L769.6 390.3L769.1 390.7L768.6 391.0Z"/><path d="M807.6 379.1L807.5 379.6L807.3 380.3L807.1 381.0L806.8 381.8L806.5 382.8L806.3 383.8L806.0 384.9L805.7 386.1L805.4 387.5L805.1 389.0L804.8 390.6L804.5 392.3L804.2 394.1L803.9 396.0L803.6 397.9L803.3 399.9L803.0 401.9L802.7 404.0L802.4 406.2L802.1 408.5L801.8 410.7L801.5 412.9L801.3 415.1L801.1 417.1L801.0 419.0L800.9 420.8L800.8 422.6L800.7 424.3L800.7 426.0L800.7 427.6L800.9 429.2L801.0 430.7L801.3 432.1L801.7 433.4L802.1 434.6L802.6 435.8L803.2 436.8L803.8 437.8L804.5 438.7L805.3 439.5L806.2 440.2L807.1 440.7L808.1 441.1L809.2 441.3L810.3 441.4L811.4 441.3L812.4 441.0L813.4 440.5L814.3 439.9L815.2 439.1L815.9 438.2L816.7 437.3L817.4 436.2L818.1 435.2L818.7 434.0L819.4 432.9L820.0 431.7L820.7 430.5L821.3 429.1L822.0 427.7L822.6 426.3L823.2 424.9L823.7 423.4L824.2 422.0L824.7 420.5L825.1 418.8L825.5 417.1L825.9 415.4L826.2 413.7L826.5 412.3L826.7 411.1L826.9 410.2L824.9 409.8L824.7 410.7L824.5 411.9L824.2 413.4L823.9 415.0L823.6 416.6L823.2 418.3L822.7 419.9L822.3 421.4L821.8 422.7L821.3 424.2L820.7 425.6L820.1 426.9L819.5 428.3L818.9 429.5L818.2 430.7L817.5 431.7L816.8 432.7L816.0 433.7L815.2 434.5L814.4 435.3L813.6 435.9L812.9 436.4L812.3 436.8L811.8 436.9L811.4 436.9L811.1 436.8L810.8 436.7L810.5 436.5L810.3 436.3L810.1 436.0L809.9 435.7L809.7 435.4L809.5 435.0L809.3 434.5L809.1 434.0L808.9 433.3L808.8 432.5L808.6 431.7L808.5 430.8L808.4 429.7L808.3 428.6L808.3 427.4L808.3 426.0L808.3 424.5L808.4 422.9L808.5 421.3L808.6 419.5L808.7 417.7L808.9 415.8L809.1 413.8L809.4 411.7L809.7 409.5L810.0 407.2L810.3 405.0L810.6 402.9L810.8 400.9L811.1 399.0L811.3 397.1L811.5 395.2L811.7 393.4L811.9 391.6L812.1 389.9L812.2 388.4L812.3 386.9L812.3 385.6L812.2 384.4L812.1 383.3L812.0 382.2L811.9 381.4L811.8 380.6L811.7 380.0L811.6 379.4Z"/><path d="M823.4 403.6L823.4 404.4L823.4 405.5L823.3 406.8L823.2 408.2L823.2 409.7L823.2 411.3L823.2 412.9L823.2 414.5L823.2 416.1L823.3 417.8L823.4 419.7L823.5 421.5L823.6 423.4L823.8 425.1L823.9 426.8L824.0 428.3L824.2 429.6L824.3 430.9L824.5 432.1L824.6 433.3L824.8 434.3L824.9 435.2L825.1 435.9L825.2 436.5L831.1 436.2L831.2 435.6L831.2 434.9L831.3 434.0L831.3 432.9L831.4 431.8L831.4 430.5L831.4 429.2L831.4 427.9L831.4 426.4L831.3 424.7L831.2 422.9L831.1 421.1L831.0 419.2L830.9 417.4L830.7 415.6L830.6 414.0L830.3 412.4L830.1 410.7L829.7 409.2L829.4 407.6L829.1 406.2L828.8 405.0L828.6 403.9L828.4 403.1Z"/><path d="M829.3 430.5L829.6 429.5L830.0 428.1L830.4 426.5L830.9 424.8L831.5 422.9L832.1 421.1L832.7 419.4L833.3 417.8L834.0 416.4L834.7 415.0L835.5 413.6L836.2 412.2L837.0 410.9L837.9 409.8L838.7 408.7L839.5 407.8L840.3 407.0L841.2 406.3L842.2 405.6L843.0 405.1L843.8 404.8L844.3 404.7L844.4 404.8L843.9 404.9L843.1 404.7L842.8 404.5L842.8 404.8L842.9 405.3L843.0 406.1L843.1 407.0L843.1 408.1L843.2 409.2L843.2 410.3L843.2 411.6L843.1 413.1L843.0 414.7L842.9 416.4L842.7 418.1L842.6 419.8L842.6 421.5L842.5 423.1L842.5 424.8L842.5 426.5L842.6 428.2L842.6 429.8L842.6 431.2L842.6 432.4L842.6 433.3L849.0 433.5L849.1 432.6L849.2 431.4L849.3 430.0L849.4 428.5L849.6 426.8L849.7 425.1L849.8 423.4L849.9 421.9L850.1 420.3L850.2 418.7L850.4 417.0L850.5 415.3L850.6 413.5L850.7 411.8L850.7 410.2L850.6 408.6L850.4 407.3L850.2 405.9L849.8 404.6L849.5 403.4L848.9 402.2L848.2 401.0L847.0 399.8L845.2 399.1L843.4 399.2L842.1 399.8L841.1 400.5L840.1 401.4L839.2 402.4L838.4 403.5L837.6 404.6L836.8 405.7L836.1 406.9L835.4 408.2L834.6 409.5L833.9 411.0L833.2 412.4L832.5 414.0L831.9 415.5L831.3 417.0L830.7 418.6L830.1 420.4L829.5 422.3L829.0 424.2L828.5 426.0L828.1 427.6L827.7 428.9L827.4 429.9Z"/><path d="M847.2 429.4L847.6 428.4L848.0 426.9L848.6 425.2L849.2 423.3L849.8 421.3L850.5 419.3L851.2 417.4L851.9 415.7L852.7 414.2L853.5 412.6L854.3 411.0L855.2 409.5L856.1 408.1L857.0 406.8L857.8 405.6L858.7 404.6L859.6 403.6L860.5 402.8L861.4 402.0L862.3 401.4L863.1 400.9L863.6 400.7L863.8 400.8L863.1 401.0L862.2 400.8L861.7 400.5L861.6 400.6L861.6 401.0L861.7 401.7L861.7 402.5L861.7 403.5L861.6 404.5L861.5 405.6L861.3 407.1L861.0 408.7L860.7 410.5L860.3 412.3L859.9 414.2L859.5 416.0L859.2 417.7L858.8 419.2L858.4 420.7L858.0 422.2L857.6 423.7L857.1 425.3L856.8 426.8L856.5 428.4L856.4 430.0L856.4 431.4L856.6 432.8L856.8 434.2L857.2 435.4L857.6 436.6L858.1 437.6L858.7 438.6L859.4 439.5L860.2 440.2L861.2 440.8L862.2 441.2L863.3 441.5L864.4 441.4L865.5 441.2L866.5 440.8L867.4 440.2L868.2 439.5L869.0 438.6L869.7 437.6L870.4 436.6L871.1 435.5L871.8 434.3L872.5 433.1L873.2 431.8L873.9 430.5L874.5 429.1L875.2 427.6L875.8 426.1L876.5 424.5L877.2 423.0L877.8 421.4L878.5 420.0L879.2 418.4L879.9 416.8L880.7 415.1L881.5 413.4L882.2 411.8L882.8 410.4L883.4 409.2L883.8 408.2L882.0 407.4L881.6 408.3L881.0 409.5L880.4 411.0L879.7 412.5L878.9 414.2L878.1 415.9L877.4 417.6L876.6 419.1L876.0 420.6L875.3 422.2L874.7 423.7L874.0 425.3L873.4 426.8L872.7 428.2L872.0 429.5L871.3 430.7L870.5 431.8L869.7 432.9L868.9 433.9L868.1 434.7L867.3 435.5L866.5 436.1L865.9 436.6L865.3 436.8L865.0 436.9L864.7 436.8L864.5 436.7L864.4 436.5L864.3 436.4L864.2 436.2L864.2 436.0L864.2 435.8L864.1 435.5L864.0 435.1L863.9 434.5L863.8 433.8L863.7 433.0L863.7 432.2L863.7 431.3L863.8 430.4L863.9 429.5L864.2 428.4L864.5 427.1L864.9 425.8L865.3 424.2L865.7 422.7L866.2 421.0L866.6 419.3L866.9 417.6L867.4 415.8L867.8 413.9L868.2 412.0L868.6 410.1L868.9 408.2L869.1 406.4L869.2 404.8L869.2 403.3L869.0 401.9L868.7 400.5L868.4 399.2L867.8 398.0L867.1 396.8L865.8 395.7L863.9 395.1L862.1 395.4L860.9 396.1L859.9 397.0L859.1 398.0L858.3 399.0L857.5 400.2L856.7 401.4L856.0 402.6L855.2 403.8L854.4 405.2L853.7 406.7L852.9 408.3L852.1 409.9L851.3 411.5L850.6 413.2L849.9 414.9L849.2 416.6L848.6 418.6L847.9 420.6L847.2 422.6L846.6 424.6L846.1 426.3L845.6 427.7L845.3 428.8Z"/><path d="M902.1 403.6L901.7 403.1L901.3 402.4L900.7 401.4L899.9 400.4L899.1 399.3L898.1 398.2L896.9 397.3L895.3 396.8L893.7 396.8L892.3 397.1L891.0 397.7L889.7 398.4L888.4 399.2L887.2 400.2L886.1 401.4L885.1 402.7L884.2 404.1L883.3 405.7L882.5 407.4L881.8 409.3L881.2 411.1L880.6 413.0L880.1 414.9L879.8 416.8L879.5 418.6L879.4 420.5L879.3 422.4L879.4 424.3L879.5 426.1L879.7 427.9L880.1 429.6L880.5 431.2L881.1 432.8L881.8 434.2L882.7 435.6L883.7 436.9L884.7 438.0L885.8 438.9L887.1 439.7L888.7 440.2L890.4 440.1L891.7 439.4L892.7 438.6L893.5 437.6L894.2 436.5L894.8 435.4L895.3 434.3L895.9 433.1L896.5 431.7L897.1 430.2L897.7 428.6L898.3 426.8L898.8 425.1L899.4 423.3L899.9 421.5L900.4 419.9L900.9 418.2L901.4 416.3L901.9 414.5L902.4 412.6L902.8 410.9L903.2 409.3L903.5 408.0L903.8 407.0L901.4 406.5L901.2 407.5L900.9 408.8L900.6 410.4L900.2 412.1L899.8 413.9L899.3 415.8L898.8 417.6L898.3 419.2L897.8 420.9L897.2 422.6L896.6 424.3L896.0 426.0L895.3 427.6L894.7 429.2L894.0 430.5L893.3 431.6L892.6 432.6L891.8 433.4L891.1 434.1L890.4 434.7L889.9 435.0L889.5 435.0L889.5 434.8L889.8 434.7L890.1 434.6L889.9 434.3L889.6 433.8L889.2 433.0L888.8 432.1L888.4 431.1L888.1 430.1L887.8 429.2L887.6 428.1L887.5 426.9L887.4 425.5L887.3 424.0L887.3 422.5L887.4 421.0L887.5 419.5L887.7 418.0L888.0 416.6L888.3 415.1L888.7 413.5L889.2 411.9L889.8 410.3L890.3 408.9L890.8 407.6L891.3 406.6L891.8 405.7L892.4 404.8L892.9 404.0L893.5 403.3L894.1 402.7L894.5 402.3L894.9 402.0L895.0 401.8L895.0 401.7L895.5 401.8L896.2 402.3L897.1 402.9L897.9 403.7L898.7 404.5L899.3 405.2L899.9 405.7Z"/><path d="M901.9 398.5L901.7 399.4L901.4 400.6L901.1 402.1L900.8 403.6L900.4 405.4L900.0 407.1L899.7 408.9L899.4 410.6L899.2 412.4L898.9 414.2L898.7 416.2L898.4 418.2L898.2 420.2L898.0 422.2L897.9 424.1L897.9 425.9L898.0 427.6L898.1 429.1L898.4 430.6L898.6 432.1L899.0 433.4L899.4 434.7L899.9 435.8L900.5 436.9L901.2 437.9L902.0 438.7L903.0 439.4L904.1 439.8L905.2 440.1L906.4 440.0L907.5 439.7L908.5 439.2L909.4 438.5L910.2 437.6L910.9 436.7L911.5 435.6L912.2 434.5L912.9 433.3L913.5 432.0L914.2 430.7L914.9 429.3L915.6 427.8L916.3 426.2L917.1 424.6L917.8 422.8L918.6 421.1L919.3 419.4L920.0 417.8L920.8 416.1L921.5 414.3L922.3 412.5L923.1 410.6L923.9 408.9L924.5 407.4L925.1 406.1L925.5 405.1L923.3 404.2L922.9 405.2L922.4 406.5L921.8 408.1L921.1 409.8L920.4 411.7L919.6 413.5L918.9 415.3L918.2 417.0L917.5 418.7L916.8 420.4L916.0 422.1L915.3 423.8L914.5 425.4L913.8 427.0L913.0 428.4L912.3 429.7L911.5 430.8L910.7 431.9L909.9 432.9L909.1 433.8L908.4 434.6L907.7 435.2L907.1 435.5L906.7 435.7L906.4 435.6L906.3 435.5L906.2 435.4L906.1 435.2L906.1 435.0L906.0 434.8L905.9 434.5L905.8 434.1L905.7 433.6L905.6 432.9L905.5 432.1L905.4 431.0L905.3 429.9L905.3 428.7L905.3 427.3L905.3 426.0L905.4 424.5L905.6 422.8L905.8 421.0L906.0 419.1L906.2 417.1L906.5 415.2L906.7 413.2L906.8 411.4L906.9 409.7L906.9 407.8L906.9 406.0L906.9 404.3L906.9 402.7L906.9 401.2L906.9 400.0L906.9 399.0Z"/><path d="M923.2 409.2L923.6 408.5L924.0 407.4L924.6 406.2L925.2 404.8L925.8 403.6L926.4 402.5L926.8 401.9L926.9 401.9L926.2 402.4L925.3 402.3L924.9 402.2L924.9 402.5L925.0 403.1L925.2 403.8L925.4 404.8L925.7 405.8L926.1 407.0L926.4 408.3L926.9 409.9L927.3 411.6L927.8 413.3L928.3 415.1L928.8 416.9L929.3 418.7L929.9 420.4L930.6 422.1L931.2 423.7L931.8 425.4L932.4 426.9L932.9 428.3L933.4 429.7L933.7 430.9L933.9 432.1L934.1 433.4L934.3 434.6L934.4 435.8L934.4 436.9L934.4 437.9L934.3 438.9L934.2 439.8L933.9 440.7L933.5 441.6L933.1 442.5L932.5 443.4L931.8 444.3L931.1 445.1L930.5 445.8L929.8 446.4L929.2 446.8L928.4 447.2L927.7 447.4L926.9 447.6L926.0 447.7L925.3 447.8L924.5 447.7L923.9 447.5L923.3 447.3L922.6 446.9L921.9 446.3L921.2 445.6L920.6 444.9L920.0 444.1L919.6 443.4L919.3 442.7L919.1 442.0L919.1 441.1L919.2 440.1L919.4 439.1L919.6 438.1L919.8 437.1L920.0 436.3L920.1 435.7L918.1 435.3L918.0 435.9L917.8 436.7L917.6 437.6L917.3 438.7L917.1 439.8L917.0 441.0L917.0 442.2L917.2 443.3L917.6 444.3L918.1 445.3L918.7 446.3L919.4 447.2L920.1 448.1L921.0 448.9L921.9 449.6L922.8 450.1L923.8 450.5L924.9 450.8L926.0 450.9L927.2 450.9L928.3 450.8L929.5 450.6L930.7 450.3L931.8 449.8L932.9 449.2L934.0 448.5L935.1 447.7L936.2 446.7L937.2 445.7L938.2 444.5L939.1 443.3L939.8 441.9L940.4 440.5L940.8 439.0L941.1 437.5L941.3 436.0L941.4 434.4L941.4 432.8L941.3 431.2L941.1 429.5L940.8 427.7L940.3 426.0L939.7 424.2L939.1 422.5L938.4 420.9L937.7 419.2L937.1 417.7L936.5 416.2L936.0 414.6L935.4 412.9L934.7 411.2L934.1 409.4L933.5 407.7L932.9 406.1L932.2 404.7L931.6 403.4L931.1 402.4L930.5 401.5L930.0 400.6L929.4 399.9L928.7 399.1L927.6 398.4L926.0 398.1L924.5 398.8L923.7 399.9L923.2 401.1L922.8 402.4L922.5 403.9L922.1 405.4L921.8 406.7L921.5 407.8L921.3 408.6Z"/><path d="M937.5 426.7L937.7 426.2L938.0 425.5L938.4 424.7L938.9 423.9L939.3 422.9L939.8 422.0L940.2 421.0L940.6 420.1L941.0 419.1L941.4 418.0L941.8 416.9L942.2 415.8L942.6 414.7L942.9 413.8L943.2 413.0L943.4 412.4L942.1 411.8L941.8 412.4L941.4 413.2L941.0 414.1L940.5 415.1L940.0 416.1L939.4 417.2L938.9 418.1L938.5 419.0L938.0 419.9L937.5 420.8L936.9 421.7L936.4 422.5L935.9 423.4L935.5 424.1L935.1 424.7L934.8 425.2Z"/><circle cx="765.4" cy="396" r="4"/></g><g id="crew" stroke-linejoin="miter"><path d="M637.2 468.9L647.8 456.7L686.1 453.9L686.7 475.6L671.7 477.2L671.1 470.0L650.6 472.2L651.1 532.2L672.2 530.0L672.0 522.8L686.4 521.1L686.4 534.4L675.6 545.0L647.2 547.2L637.2 537.8Z"/><path fill-rule="evenodd" d="M707.8 453.3L751.7 451.7L760.6 461.1L761.1 493.3L752.2 502.8L758.9 527.2L763.3 527.2L763.3 540.0L751.1 540.6L737.2 503.9L726.1 504.4L726.7 527.8L731.1 527.8L731.1 540.6L707.8 541.7L707.8 528.9L711.7 528.9L710.6 466.7L707.8 466.7ZM725.0 465.6L746.1 465.8L746.1 488.9L725.6 489.4Z"/><path d="M784.2 451.7L834.7 451.2L834.7 472.6L817.6 472.6L817.4 464.9L802.6 464.9L802.6 488.9L825.5 488.7L825.7 502.1L802.6 502.3L802.6 526.6L820.7 526.4L820.7 519.7L835.2 519.2L835.4 540.0L784.2 540.3L784.2 527.8L788.8 527.8L788.6 463.9L784.2 463.9Z"/><path d="M855.0 452.6L880.0 453.2L881.3 499.0L890.7 452.6L905.1 453.2L913.4 502.2L918.9 472.9L915.2 472.0L916.2 458.0L939.1 459.6L938.6 472.9L934.3 473.9L921.0 546.4L905.6 544.8L897.6 510.2L888.5 543.2L873.1 541.6L865.1 501.6L858.2 463.3L855.0 463.3Z"/></g></defs><use href="#crew" fill="#fdfdfd" stroke="#fdfdfd" stroke-width="13.6"/><use href="#crew" fill="#0c0c0c" stroke="#0c0c0c" stroke-width="11"/><use href="#crew" fill="none" stroke="#fdfdfd" stroke-width="6"/><use href="#crew" fill="#0c0c0c" stroke="#0c0c0c" stroke-width="0.6"/><path d="M726.1 359.5C723.8 357.9 727.4 349.5 728.8 345.7C730.2 341.9 732.6 338.8 734.6 336.6C736.6 334.4 738.7 333.5 740.5 332.4C742.3 331.3 743.1 332.2 745.6 330.2C748.1 328.1 752.0 323.7 755.4 320.1C758.8 316.5 762.1 311.8 766.0 308.6C769.9 305.5 774.3 303.1 778.8 301.2C783.2 299.2 788.8 297.2 792.7 296.9C796.6 296.6 799.0 299.2 802.2 299.6C805.4 300.0 807.5 298.6 811.8 299.3C816.1 300.0 822.5 301.7 827.8 303.6C833.1 305.5 839.0 308.0 843.8 310.6C848.6 313.2 852.8 315.7 856.5 319.1C860.2 322.5 863.2 326.9 866.1 330.8C869.0 334.7 871.7 338.7 873.6 342.5C875.5 346.3 876.9 350.2 877.6 353.6C878.3 357.0 876.7 359.3 877.6 362.6C878.5 365.9 881.7 369.5 883.2 373.4C884.7 377.3 885.7 381.9 886.4 386.2C887.1 390.5 887.3 395.0 887.3 399.0C887.3 403.0 887.0 406.2 886.4 410.0C885.8 413.8 884.8 418.2 883.4 422.0C882.0 425.8 879.8 429.6 877.8 433.0C875.8 436.4 873.2 439.5 871.4 442.5C869.6 445.5 869.0 448.4 866.8 451.0C864.6 453.6 860.9 457.2 858.0 458.0C855.1 458.8 851.5 458.3 849.6 456.0C847.7 453.7 847.4 448.5 846.6 444.0C845.8 439.5 846.1 434.3 845.0 429.0C843.9 423.7 841.8 417.5 840.0 412.0C838.2 406.5 836.1 401.0 834.0 396.0C831.9 391.0 830.0 386.6 827.5 382.0C825.0 377.4 821.7 372.8 819.3 368.1C816.9 363.4 815.9 357.0 812.9 354.0C809.9 351.0 805.8 350.9 801.2 350.0C796.6 349.1 791.4 348.4 785.2 348.4C779.0 348.4 771.0 348.9 763.9 350.0C756.8 351.1 748.9 353.7 742.6 355.3C736.3 356.9 728.4 361.1 726.1 359.5Z" fill="#fdfdfd" stroke="#fdfdfd" stroke-width="5.4" stroke-linejoin="round"/><path d="M726.1 359.5C723.8 357.9 727.4 349.5 728.8 345.7C730.2 341.9 732.6 338.8 734.6 336.6C736.6 334.4 738.7 333.5 740.5 332.4C742.3 331.3 743.1 332.2 745.6 330.2C748.1 328.1 752.0 323.7 755.4 320.1C758.8 316.5 762.1 311.8 766.0 308.6C769.9 305.5 774.3 303.1 778.8 301.2C783.2 299.2 788.8 297.2 792.7 296.9C796.6 296.6 799.0 299.2 802.2 299.6C805.4 300.0 807.5 298.6 811.8 299.3C816.1 300.0 822.5 301.7 827.8 303.6C833.1 305.5 839.0 308.0 843.8 310.6C848.6 313.2 852.8 315.7 856.5 319.1C860.2 322.5 863.2 326.9 866.1 330.8C869.0 334.7 871.7 338.7 873.6 342.5C875.5 346.3 876.9 350.2 877.6 353.6C878.3 357.0 876.7 359.3 877.6 362.6C878.5 365.9 881.7 369.5 883.2 373.4C884.7 377.3 885.7 381.9 886.4 386.2C887.1 390.5 887.3 395.0 887.3 399.0C887.3 403.0 887.0 406.2 886.4 410.0C885.8 413.8 884.8 418.2 883.4 422.0C882.0 425.8 879.8 429.6 877.8 433.0C875.8 436.4 873.2 439.5 871.4 442.5C869.6 445.5 869.0 448.4 866.8 451.0C864.6 453.6 860.9 457.2 858.0 458.0C855.1 458.8 851.5 458.3 849.6 456.0C847.7 453.7 847.4 448.5 846.6 444.0C845.8 439.5 846.1 434.3 845.0 429.0C843.9 423.7 841.8 417.5 840.0 412.0C838.2 406.5 836.1 401.0 834.0 396.0C831.9 391.0 830.0 386.6 827.5 382.0C825.0 377.4 821.7 372.8 819.3 368.1C816.9 363.4 815.9 357.0 812.9 354.0C809.9 351.0 805.8 350.9 801.2 350.0C796.6 349.1 791.4 348.4 785.2 348.4C779.0 348.4 771.0 348.9 763.9 350.0C756.8 351.1 748.9 353.7 742.6 355.3C736.3 356.9 728.4 361.1 726.1 359.5Z" fill="#a70e25" stroke="#0c0c0c" stroke-width="3" stroke-linejoin="round"/><path d="M796.4 307 Q799.6 303.6 803 301.2 M868.3 378.7 Q874.6 372 877.4 362.6 M804 346 L808.6 342.8" stroke="#0c0c0c" stroke-width="1.4" fill="none" stroke-linecap="round"/><path d="M719.2 363.8C723.5 361.5 735.2 357.6 742.6 355.3C750.0 353.0 756.8 351.1 763.9 350.0C771.0 348.9 779.0 348.4 785.2 348.4C791.4 348.4 796.8 349.0 801.2 350.0C805.6 351.0 808.9 351.5 811.8 354.2C814.7 356.9 816.4 362.5 818.4 366.4C820.4 370.3 822.3 374.3 824.0 377.6C825.7 380.9 828.9 385.4 828.6 386.4C828.3 387.4 824.8 384.6 822.0 383.4C819.2 382.1 815.5 379.5 811.8 378.9C808.1 378.3 804.4 379.7 800.0 379.6C795.6 379.5 791.2 378.1 785.2 378.2C779.2 378.3 771.0 378.8 763.9 380.3C756.8 381.8 748.2 385.4 742.6 387.2C737.0 389.0 733.8 390.0 730.0 391.4C726.2 392.8 721.6 395.8 719.6 395.6C717.6 395.4 718.6 392.4 718.0 390.0C717.4 387.6 715.9 383.3 716.0 381.0C716.1 378.7 718.2 377.9 718.4 376.0C718.6 374.1 716.9 371.4 717.0 369.4C717.1 367.4 714.9 366.1 719.2 363.8Z" fill="#fdfdfd" stroke="#0c0c0c" stroke-width="2.1" stroke-linejoin="round"/><path d="M830.7 481.0C830.8 479.0 830.8 475.5 831.3 473.1C831.8 470.7 832.6 468.2 833.5 466.5C834.4 464.8 835.4 463.7 836.5 462.6C837.6 461.5 838.9 460.9 840.1 460.1C841.4 459.4 842.7 458.6 844.0 458.1C845.3 457.6 846.6 457.1 847.9 456.9C849.1 456.7 850.3 456.6 851.5 456.7C852.7 456.9 853.7 457.8 854.9 457.8C856.1 457.8 857.2 457.1 858.5 456.9C859.8 456.7 861.4 456.4 862.7 456.7C864.0 457.0 865.3 457.7 866.5 458.5C867.7 459.3 868.9 460.3 869.9 461.5C870.9 462.7 871.9 464.1 872.7 465.5C873.5 466.9 874.3 468.7 874.9 470.1C875.5 471.5 875.9 472.7 876.1 474.1C876.3 475.5 876.4 477.1 876.3 478.5C876.2 479.9 876.1 481.3 875.7 482.7C875.3 484.1 874.8 485.7 874.1 486.9C873.4 488.1 872.4 489.1 871.3 489.9C870.2 490.7 868.8 491.3 867.7 491.9C866.6 492.5 865.8 493.0 864.9 493.7C864.0 494.4 863.3 495.5 862.5 496.3C861.7 497.1 860.9 497.9 859.9 498.5C858.9 499.1 857.6 499.6 856.5 499.9C855.4 500.2 854.6 500.4 853.5 500.3C852.4 500.2 851.2 499.8 850.1 499.3C849.0 498.8 848.0 498.2 847.1 497.3C846.2 496.4 845.5 494.7 844.5 494.1C843.5 493.5 842.2 493.8 841.1 493.7C840.0 493.6 839.0 493.7 837.9 493.3C836.8 492.9 835.5 492.3 834.5 491.5C833.5 490.7 832.7 489.8 832.1 488.7C831.5 487.6 831.1 486.4 830.9 485.1C830.7 483.8 830.6 483.0 830.7 481.0Z" fill="#0c0c0c" stroke="#fdfdfd" stroke-width="1.2"/><path d="M832.2 478.9C832.3 476.9 832.3 473.4 832.8 471.0C833.3 468.6 834.1 466.1 835.0 464.4C835.9 462.6 836.9 461.6 838.0 460.5C839.1 459.4 840.4 458.8 841.6 458.0C842.9 457.2 844.2 456.5 845.5 456.0C846.8 455.5 848.1 455.0 849.4 454.8C850.6 454.6 851.8 454.5 853.0 454.6C854.2 454.8 855.2 455.7 856.4 455.7C857.6 455.7 858.7 455.0 860.0 454.8C861.3 454.6 862.9 454.3 864.2 454.6C865.5 454.9 866.8 455.6 868.0 456.4C869.2 457.2 870.4 458.2 871.4 459.4C872.4 460.6 873.4 462.0 874.2 463.4C875.0 464.8 875.8 466.6 876.4 468.0C877.0 469.4 877.4 470.6 877.6 472.0C877.8 473.4 877.9 475.0 877.8 476.4C877.7 477.8 877.6 479.2 877.2 480.6C876.8 482.0 876.3 483.6 875.6 484.8C874.9 486.0 873.9 487.0 872.8 487.8C871.7 488.6 870.3 489.2 869.2 489.8C868.1 490.4 867.3 490.9 866.4 491.6C865.5 492.3 864.8 493.4 864.0 494.2C863.2 495.0 862.4 495.8 861.4 496.4C860.4 497.0 859.1 497.5 858.0 497.8C856.9 498.1 856.1 498.3 855.0 498.2C853.9 498.1 852.7 497.7 851.6 497.2C850.5 496.7 849.5 496.1 848.6 495.2C847.7 494.3 847.0 492.6 846.0 492.0C845.0 491.4 843.7 491.7 842.6 491.6C841.5 491.5 840.5 491.6 839.4 491.2C838.3 490.8 837.0 490.2 836.0 489.4C835.0 488.6 834.2 487.7 833.6 486.6C833.0 485.5 832.6 484.3 832.4 483.0C832.2 481.7 832.1 480.9 832.2 478.9Z" fill="#fdfdfd" stroke="#0c0c0c" stroke-width="1.9"/><path d="M839.4 465.9 Q841.4 463.8 844.6 463 M855 462.8 Q857.8 462.2 860.5 462.6 M839.4 475 Q838.8 477.8 840.1 480.2 M860.5 489.3 Q863 488 864.4 485.7" stroke="#0c0c0c" stroke-width="1.3" fill="none" stroke-linecap="round"/><use href="#scr" fill="#fdfdfd" stroke="#fdfdfd" stroke-width="2.6" stroke-linejoin="round"/><use href="#scr" fill="#0c0c0c" stroke="#0c0c0c" stroke-width="0.3"/><g transform="translate(786.5 586.9) rotate(0.25)"><text x="0" y="0" text-anchor="middle" font-family="Liberation Mono" font-weight="bold" font-size="33.6" fill="#0c0c0c" stroke="#0c0c0c" stroke-width="1.1" textLength="252" lengthAdjust="spacingAndGlyphs" transform="scale(1 1.12)">MAKING MEMORIES</text></g><g transform="rotate(0.3 786 620)"><rect x="696.4" y="603" width="178.8" height="34.6" rx="17.3" fill="#0c0c0c"/><rect x="698.4" y="605" width="174.8" height="30.6" rx="15.3" fill="none" stroke="#fdfdfd" stroke-width="0.9"/><circle cx="708.8" cy="620.6" r="3.9" fill="#fdfdfd"/><circle cx="862" cy="620.6" r="3.9" fill="#fdfdfd"/><text x="786.8" y="632.6" text-anchor="middle" font-family="Liberation Sans" font-weight="bold" font-size="34.4" fill="#fdfdfd" textLength="136" lengthAdjust="spacingAndGlyphs">TOGETHER</text></g><path d="M676.3 606.6 Q678.632 615.648 686.9 618.2 Q678.632 620.7520000000001 676.3 629.8000000000001 Q673.968 620.7520000000001 665.6999999999999 618.2 Q673.968 615.648 676.3 606.6Z" fill="#0c0c0c"/><path d="M894.8 610.1999999999999 Q897.132 619.2479999999999 905.4 621.8 Q897.132 624.352 894.8 633.4 Q892.468 624.352 884.1999999999999 621.8 Q892.468 619.2479999999999 894.8 610.1999999999999Z" fill="#0c0c0c"/><path d="M624.5 293.5 H948.5 V640.5 H624.5 Z" fill="none" stroke="#c4c4c9" stroke-width="1"/><rect x="621.0" y="290.0" width="7" height="7" fill="#e6104e" stroke="#f6a0c0" stroke-width="0.6"/><rect x="945.0" y="290.0" width="7" height="7" fill="#e6104e" stroke="#f6a0c0" stroke-width="0.6"/><rect x="621.0" y="637.0" width="7" height="7" fill="#e6104e" stroke="#f6a0c0" stroke-width="0.6"/><rect x="945.0" y="637.0" width="7" height="7" fill="#e6104e" stroke="#f6a0c0" stroke-width="0.6"/><rect x="783.5" y="290.5" width="6" height="6" fill="#fbe0f2" stroke="#8a1f58" stroke-width="1.1"/><rect x="783.5" y="637.5" width="6" height="6" fill="#fbe0f2" stroke="#8a1f58" stroke-width="1.1"/><rect x="621.5" y="464.5" width="6" height="6" fill="#fbe0f2" stroke="#8a1f58" stroke-width="1.1"/><rect x="945.5" y="464.5" width="6" height="6" fill="#fbe0f2" stroke="#8a1f58" stroke-width="1.1"/><path d="M782.5 477.09999999999997 l4.2 4.6 h-3 v5.5 h5.5 v-3 l4.6 4.2 l-4.6 4.2 v-3 h-5.5 v5.5 h3 l-4.2 4.6 l-4.2 -4.6 h3 v-5.5 h-5.5 v3 l-4.6 -4.2 l4.6 -4.2 v3 h5.5 v-5.5 h-3 Z" fill="#fff" stroke="#111" stroke-width="1" stroke-linejoin="miter"/></svg>
<!-- ruler -->
<div class="abs" style="left:0px;top:120px;width:1584px;height:21px;background:#2d2d2d;"></div>
<div class="abs" style="left:0px;top:141px;width:21px;height:809px;background:#2c2c2c;"></div>
<div class="abs" style="left:0px;top:120px;width:1px;height:830px;background:#6a6a6a;"></div>
<svg class="abs" style="left:0px;top:120px;" width="1584" height="830" viewBox="0 120 1584 830"><path d="M27.5 120.8V141M34.5 136.2V141M40.5 136.2V141M47.5 136.2V141M53.5 136.2V141M60.5 134V141M66.5 136.2V141M73.5 136.2V141M79.5 136.2V141M86.5 136.2V141M92.5 120.8V141M99.5 136.2V141M105.5 136.2V141M112.5 136.2V141M118.5 136.2V141M125.5 134V141M131.5 136.2V141M137.5 136.2V141M144.5 136.2V141M150.5 136.2V141M157.5 120.8V141M163.5 136.2V141M170.5 136.2V141M176.5 136.2V141M183.5 136.2V141M189.5 134V141M196.5 136.2V141M202.5 136.2V141M209.5 136.2V141M215.5 136.2V141M222.5 120.8V141M228.5 136.2V141M235.5 136.2V141M241.5 136.2V141M248.5 136.2V141M254.5 134V141M261.5 136.2V141M267.5 136.2V141M274.5 136.2V141M280.5 136.2V141M287.5 120.8V141M293.5 136.2V141M299.5 136.2V141M306.5 136.2V141M312.5 136.2V141M319.5 134V141M325.5 136.2V141M332.5 136.2V141M338.5 136.2V141M345.5 136.2V141M351.5 120.8V141M358.5 136.2V141M364.5 136.2V141M371.5 136.2V141M377.5 136.2V141M384.5 134V141M390.5 136.2V141M397.5 136.2V141M403.5 136.2V141M410.5 136.2V141M416.5 120.8V141M423.5 136.2V141M429.5 136.2V141M436.5 136.2V141M442.5 136.2V141M449.5 134V141M455.5 136.2V141M461.5 136.2V141M468.5 136.2V141M474.5 136.2V141M481.5 120.8V141M487.5 136.2V141M494.5 136.2V141M500.5 136.2V141M507.5 136.2V141M513.5 134V141M520.5 136.2V141M526.5 136.2V141M533.5 136.2V141M539.5 136.2V141M546.5 120.8V141M552.5 136.2V141M559.5 136.2V141M565.5 136.2V141M572.5 136.2V141M578.5 134V141M585.5 136.2V141M591.5 136.2V141M598.5 136.2V141M604.5 136.2V141M611.5 120.8V141M617.5 136.2V141M623.5 136.2V141M630.5 136.2V141M636.5 136.2V141M643.5 134V141M649.5 136.2V141M656.5 136.2V141M662.5 136.2V141M669.5 136.2V141M675.5 120.8V141M682.5 136.2V141M688.5 136.2V141M695.5 136.2V141M701.5 136.2V141M708.5 134V141M714.5 136.2V141M721.5 136.2V141M727.5 136.2V141M734.5 136.2V141M740.5 120.8V141M747.5 136.2V141M753.5 136.2V141M760.5 136.2V141M766.5 136.2V141M773.5 134V141M779.5 136.2V141M785.5 136.2V141M792.5 136.2V141M798.5 136.2V141M805.5 120.8V141M811.5 136.2V141M818.5 136.2V141M824.5 136.2V141M831.5 136.2V141M837.5 134V141M844.5 136.2V141M850.5 136.2V141M857.5 136.2V141M863.5 136.2V141M870.5 120.8V141M876.5 136.2V141M883.5 136.2V141M889.5 136.2V141M896.5 136.2V141M902.5 134V141M909.5 136.2V141M915.5 136.2V141M922.5 136.2V141M928.5 136.2V141M935.5 120.8V141M941.5 136.2V141M947.5 136.2V141M954.5 136.2V141M960.5 136.2V141M967.5 134V141M973.5 136.2V141M980.5 136.2V141M986.5 136.2V141M993.5 136.2V141M999.5 120.8V141M1006.5 136.2V141M1012.5 136.2V141M1019.5 136.2V141M1025.5 136.2V141M1032.5 134V141M1038.5 136.2V141M1045.5 136.2V141M1051.5 136.2V141M1058.5 136.2V141M1064.5 120.8V141M1071.5 136.2V141M1077.5 136.2V141M1084.5 136.2V141M1090.5 136.2V141M1097.5 134V141M1103.5 136.2V141M1109.5 136.2V141M1116.5 136.2V141M1122.5 136.2V141M1129.5 120.8V141M1135.5 136.2V141M1142.5 136.2V141M1148.5 136.2V141M1155.5 136.2V141M1161.5 134V141M1168.5 136.2V141M1174.5 136.2V141M1181.5 136.2V141M1187.5 136.2V141M1194.5 120.8V141M1200.5 136.2V141M1207.5 136.2V141M1213.5 136.2V141M1220.5 136.2V141M1226.5 134V141M1233.5 136.2V141M1239.5 136.2V141M1246.5 136.2V141M1252.5 136.2V141M1259.5 120.8V141M1265.5 136.2V141M1271.5 136.2V141M1278.5 136.2V141M1284.5 136.2V141M1291.5 134V141M1297.5 136.2V141M1304.5 136.2V141M1310.5 136.2V141M1317.5 136.2V141M1323.5 120.8V141M1330.5 136.2V141M1336.5 136.2V141M1343.5 136.2V141M1349.5 136.2V141M1356.5 134V141M1362.5 136.2V141M1369.5 136.2V141M1375.5 136.2V141M1382.5 136.2V141M1388.5 120.8V141M1395.5 136.2V141M1401.5 136.2V141M1408.5 136.2V141M1414.5 136.2V141M1421.5 134V141M1427.5 136.2V141M1433.5 136.2V141M1440.5 136.2V141M1446.5 136.2V141M1453.5 120.8V141M1459.5 136.2V141M1466.5 136.2V141M1472.5 136.2V141M1479.5 136.2V141M1485.5 134V141M1492.5 136.2V141M1498.5 136.2V141M1505.5 136.2V141M1511.5 136.2V141M1518.5 120.8V141M1524.5 136.2V141M1531.5 136.2V141M1537.5 136.2V141M1544.5 136.2V141M1550.5 134V141M1557.5 136.2V141M1563.5 136.2V141M1570.5 136.2V141M1576.5 136.2V141M1583.5 120.8V141" stroke="#a6a6a6" stroke-width="1" fill="none"/><path d="M15.8 154.5H21M15.8 160.5H21M15.8 167.5H21M15.8 173.5H21M14.3 180.5H21M15.8 186.5H21M15.8 193.5H21M15.8 199.5H21M15.8 206.5H21M15.8 218.5H21M15.8 225.5H21M15.8 231.5H21M15.8 238.5H21M14.3 244.5H21M15.8 251.5H21M15.8 257.5H21M15.8 264.5H21M15.8 270.5H21M15.8 283.5H21M15.8 290.5H21M15.8 296.5H21M15.8 303.5H21M14.3 309.5H21M15.8 316.5H21M15.8 322.5H21M15.8 329.5H21M15.8 335.5H21M15.8 348.5H21M15.8 355.5H21M15.8 361.5H21M15.8 368.5H21M14.3 374.5H21M15.8 380.5H21M15.8 387.5H21M15.8 393.5H21M15.8 400.5H21M15.8 413.5H21M15.8 419.5H21M15.8 426.5H21M15.8 432.5H21M14.3 439.5H21M15.8 445.5H21M15.8 452.5H21M15.8 458.5H21M15.8 465.5H21M15.8 478.5H21M15.8 484.5H21M15.8 491.5H21M15.8 497.5H21M14.3 504.5H21M15.8 510.5H21M15.8 517.5H21M15.8 523.5H21M15.8 530.5H21M15.8 542.5H21M15.8 549.5H21M15.8 555.5H21M15.8 562.5H21M14.3 568.5H21M15.8 575.5H21M15.8 581.5H21M15.8 588.5H21M15.8 594.5H21M15.8 607.5H21M15.8 614.5H21M15.8 620.5H21M15.8 627.5H21M14.3 633.5H21M15.8 640.5H21M15.8 646.5H21M15.8 653.5H21M15.8 659.5H21M15.8 672.5H21M15.8 679.5H21M15.8 685.5H21M15.8 692.5H21M14.3 698.5H21M15.8 704.5H21M15.8 711.5H21M15.8 717.5H21M15.8 724.5H21M15.8 737.5H21M15.8 743.5H21M15.8 750.5H21M15.8 756.5H21M14.3 763.5H21M15.8 769.5H21M15.8 776.5H21M15.8 782.5H21M15.8 789.5H21M15.8 802.5H21M15.8 808.5H21M15.8 815.5H21M15.8 821.5H21M14.3 828.5H21M15.8 834.5H21M15.8 841.5H21M15.8 847.5H21M15.8 854.5H21M15.8 866.5H21M15.8 873.5H21M15.8 879.5H21M15.8 886.5H21M14.3 892.5H21M15.8 899.5H21M15.8 905.5H21M15.8 912.5H21M15.8 918.5H21M15.8 931.5H21M15.8 938.5H21M15.8 944.5H21" stroke="#a4a4a4" stroke-width="1" fill="none"/><path d="M1 147.5H21M1 212.5H21M1 277.5H21M1 342.5H21M1 406.5H21M1 471.5H21M1 536.5H21M1 601.5H21M1 666.5H21M1 730.5H21M1 795.5H21M1 860.5H21M1 925.5H21" stroke="#909090" stroke-width="1" fill="none"/><text x="30.4" y="133" font-size="12" fill="#cdcdcd" font-family="Liberation Sans">-18</text><text x="95.2" y="133" font-size="12" fill="#cdcdcd" font-family="Liberation Sans">-16</text><text x="160.0" y="133" font-size="12" fill="#cdcdcd" font-family="Liberation Sans">-14</text><text x="224.8" y="133" font-size="12" fill="#cdcdcd" font-family="Liberation Sans">-12</text><text x="289.6" y="133" font-size="12" fill="#cdcdcd" font-family="Liberation Sans">-10</text><text x="354.4" y="133" font-size="12" fill="#cdcdcd" font-family="Liberation Sans">-8</text><text x="419.2" y="133" font-size="12" fill="#cdcdcd" font-family="Liberation Sans">-6</text><text x="484.0" y="133" font-size="12" fill="#cdcdcd" font-family="Liberation Sans">-4</text><text x="548.8" y="133" font-size="12" fill="#cdcdcd" font-family="Liberation Sans">-2</text><text x="613.6" y="133" font-size="12" fill="#cdcdcd" font-family="Liberation Sans">0</text><text x="678.4" y="133" font-size="12" fill="#cdcdcd" font-family="Liberation Sans">2</text><text x="743.2" y="133" font-size="12" fill="#cdcdcd" font-family="Liberation Sans">4</text><text x="808.0" y="133" font-size="12" fill="#cdcdcd" font-family="Liberation Sans">6</text><text x="872.8" y="133" font-size="12" fill="#cdcdcd" font-family="Liberation Sans">8</text><text x="937.6" y="133" font-size="12" fill="#cdcdcd" font-family="Liberation Sans">10</text><text x="1002.4" y="133" font-size="12" fill="#cdcdcd" font-family="Liberation Sans">12</text><text x="1067.2" y="133" font-size="12" fill="#cdcdcd" font-family="Liberation Sans">14</text><text x="1132.0" y="133" font-size="12" fill="#cdcdcd" font-family="Liberation Sans">16</text><text x="1196.8" y="133" font-size="12" fill="#cdcdcd" font-family="Liberation Sans">18</text><text x="1261.6" y="133" font-size="12" fill="#cdcdcd" font-family="Liberation Sans">20</text><text x="1326.4" y="133" font-size="12" fill="#cdcdcd" font-family="Liberation Sans">22</text><text x="1391.2" y="133" font-size="12" fill="#cdcdcd" font-family="Liberation Sans">24</text><text x="1456.0" y="133" font-size="12" fill="#cdcdcd" font-family="Liberation Sans">26</text><text x="1520.8" y="133" font-size="12" fill="#cdcdcd" font-family="Liberation Sans">28</text><text transform="translate(13.8 161.2) rotate(-90)" font-size="12" fill="#cdcdcd" font-family="Liberation Sans">-4</text><text transform="translate(13.8 226.0) rotate(-90)" font-size="12" fill="#cdcdcd" font-family="Liberation Sans">-2</text><text transform="translate(13.8 286.8) rotate(-90)" font-size="12" fill="#cdcdcd" font-family="Liberation Sans">0</text><text transform="translate(13.8 351.6) rotate(-90)" font-size="12" fill="#cdcdcd" font-family="Liberation Sans">2</text><text transform="translate(13.8 416.4) rotate(-90)" font-size="12" fill="#cdcdcd" font-family="Liberation Sans">4</text><text transform="translate(13.8 481.2) rotate(-90)" font-size="12" fill="#cdcdcd" font-family="Liberation Sans">6</text><text transform="translate(13.8 546.0) rotate(-90)" font-size="12" fill="#cdcdcd" font-family="Liberation Sans">8</text><text transform="translate(13.8 617.4) rotate(-90)" font-size="12" fill="#cdcdcd" font-family="Liberation Sans">10</text><text transform="translate(13.8 682.2) rotate(-90)" font-size="12" fill="#cdcdcd" font-family="Liberation Sans">12</text><text transform="translate(13.8 747.0) rotate(-90)" font-size="12" fill="#cdcdcd" font-family="Liberation Sans">14</text><text transform="translate(13.8 811.8) rotate(-90)" font-size="12" fill="#cdcdcd" font-family="Liberation Sans">16</text><text transform="translate(13.8 876.6) rotate(-90)" font-size="12" fill="#cdcdcd" font-family="Liberation Sans">18</text><text transform="translate(13.8 941.4) rotate(-90)" font-size="12" fill="#cdcdcd" font-family="Liberation Sans">20</text><rect x="989.6" y="121" width="2.2" height="20" fill="#f2b24e"/><rect x="990.3" y="121" width="0.8" height="20" fill="#fde8b8"/><rect x="1" y="812" width="20" height="1.2" fill="#e6b840"/><path d="M784.5 121.5V141" stroke="#eee" stroke-width="1" stroke-dasharray="1 2" fill="none"/><path d="M1 488.5H20.5" stroke="#eee" stroke-width="1" stroke-dasharray="1 2" fill="none"/><text x="3.4" y="139.7" font-size="11" fill="#f2e23a" font-family="Liberation Sans" textLength="19.4" lengthAdjust="spacingAndGlyphs">inch</text></svg>
<!-- panel -->
<div id="panelbg"></div>
<div class="abs" style="left:1594.5px;top:94px;width:230px;height:24.5px;background:linear-gradient(#747474,#5d5d5d);border:1px solid #3a3a3a;border-radius:3px;"></div>
<div class="abs" style="left:1799.5px;top:95px;width:1px;height:22.5px;background:#484848;"></div>
<div class="abs" style="left:1600.60px;top:97.80px;font-size:14px;line-height:18px;color:#fff;white-space:pre;letter-spacing:-0.160px;">Create template</div>
<svg class="abs" style="left:1584px;top:90px;" width="336" height="32" viewBox="1584 90 336 32"><path d="M1805.7 103.6 L1811.6 109.5 L1817.5 103.6" stroke="#b6f1fa" stroke-width="1.6" fill="none" stroke-linecap="round" stroke-linejoin="round"/><path d="M1834.3 95.5 H1847.5 L1853.5 101.5 V115.6 Q1853.5 117.1 1852 117.1 H1834.3 Q1832.8 117.1 1832.8 115.6 V97 Q1832.8 95.5 1834.3 95.5 Z" fill="#868686"/><rect x="1836.2" y="95.5" width="9.6" height="6.6" fill="#5f5f5f"/><rect x="1838" y="96.3" width="2.4" height="4.6" fill="#868686"/><rect x="1836" y="106.8" width="14.2" height="10.3" fill="#5f5f5f"/><rect x="1837.3" y="108" width="11.6" height="9.1" fill="#808080"/><path d="M1864.2 106.3 H1881.4 M1872.8 97.7 V114.9" stroke="#b6f1fa" stroke-width="2.1" fill="none"/><path d="M1914.47 108.60 L1912.71 112.86 L1909.90 111.47 L1908.07 113.30 L1909.46 116.11 L1905.20 117.87 L1904.19 114.90 L1901.61 114.90 L1900.60 117.87 L1896.34 116.11 L1897.73 113.30 L1895.90 111.47 L1893.09 112.86 L1891.33 108.60 L1894.30 107.59 L1894.30 105.01 L1891.33 104.00 L1893.09 99.74 L1895.90 101.13 L1897.73 99.30 L1896.34 96.49 L1900.60 94.73 L1901.61 97.70 L1904.19 97.70 L1905.20 94.73 L1909.46 96.49 L1908.07 99.30 L1909.90 101.13 L1912.71 99.74 L1914.47 104.00 L1911.50 105.01 L1911.50 107.59Z" fill="#b6f1fa" stroke="#b6f1fa" stroke-width="0.8" stroke-linejoin="round"/><circle cx="1902.9" cy="106.3" r="4.3" fill="#585858"/></svg>
<div class="abs" style="left:1592px;top:123px;width:295px;height:827.8px;background:#595959;border:1px solid #8e8e8e;"></div>
<div class="abs" style="left:1887px;top:123px;width:33px;height:93px;background:#cfcdd2;"></div>
<div class="abs" style="left:1887px;top:123px;width:33px;height:1px;background:#9a9a9a;"></div>
<svg class="abs" style="left:1887px;top:123px;" width="33" height="280" viewBox="1887 123 33 280"><circle cx="1904" cy="135.2" r="7" fill="#b6f1fa"/><path d="M1901 135.4 L1903.2 137.6 L1907.2 132.8" stroke="#d8f8fc" stroke-width="1" fill="none"/><circle cx="1904.2" cy="229.3" r="7" fill="#b6f1fa"/><path d="M1901 229.5 L1903.3 231.8 L1907.4 226.9" stroke="#2f6a78" stroke-width="1.2" fill="none"/><circle cx="1904.2" cy="304.3" r="7" fill="#b6f1fa"/><path d="M1901 304.5 L1903.3 306.8 L1907.4 301.90000000000003" stroke="#2f6a78" stroke-width="1.2" fill="none"/><path d="M1887 291.3 H1920 M1887 366.3 H1920" stroke="#3f3f3f" stroke-width="1" fill="none"/><path d="M1894.4 379.4 H1912.2 M1903.3 370.4 V388.4" stroke="#b6f1fa" stroke-width="2" fill="none"/></svg>
<div class="abs" style="left:1899.94px;top:152.60px;font-size:14px;line-height:18px;color:#3c3c3c;white-space:pre;">R</div>
<div class="abs" style="left:1899.56px;top:171.30px;font-size:14px;line-height:18px;color:#3c3c3c;white-space:pre;">G</div>
<div class="abs" style="left:1900.33px;top:190.20px;font-size:14px;line-height:18px;color:#3c3c3c;white-space:pre;">B</div>
<div class="abs" style="left:1897.99px;top:246.20px;font-size:14px;line-height:18px;color:#d6d6d6;white-space:pre;">W</div>
<div class="abs" style="left:1900.71px;top:265.40px;font-size:14px;line-height:18px;color:#d6d6d6;white-space:pre;">1</div>
<div class="abs" style="left:1897.99px;top:321.20px;font-size:14px;line-height:18px;color:#d6d6d6;white-space:pre;">W</div>
<div class="abs" style="left:1900.71px;top:340.40px;font-size:14px;line-height:18px;color:#d6d6d6;white-space:pre;">2</div>
<div class="abs" style="left:1598.40px;top:134.20px;font-size:14px;line-height:18px;color:#fff;white-space:pre;letter-spacing:-0.107px;">Color mode</div>
<div class="abs" style="left:1680.60px;top:134.20px;font-size:14px;line-height:18px;color:#fff;white-space:pre;">-</div>
<div class="abs" style="left:1690.80px;top:134.20px;font-size:14px;line-height:18px;color:#fff;white-space:pre;letter-spacing:-0.023px;">Follow the picture</div>
<div class="abs" style="left:1598.4px;top:161.4px;width:282.4px;height:25px;background:linear-gradient(#787878,#626262);border:1px solid #3c3c3c;border-radius:3px;"></div>
<div class="abs" style="left:1723.55px;top:165.90px;font-size:14px;line-height:18px;color:#dadada;white-space:pre;letter-spacing:-0.814px;">Reset</div>
<div class="abs" style="left:1598.6px;top:207px;width:281.6px;height:190.5px;background:transparent;border:1px solid #7b7b7b;border-radius:5px;"></div>
<div class="abs" style="left:1613.6px;top:197px;width:92.8px;height:21px;background:#424242;border-radius:2px;"></div>
<div class="abs" style="left:1621.20px;top:199.20px;font-size:14px;line-height:18px;color:#e4e4e4;white-space:pre;letter-spacing:-0.054px;">Environment</div>
<div class="abs" style="left:1609.30px;top:230.30px;font-size:14px;line-height:18px;color:#fff;white-space:pre;letter-spacing:-0.264px;">Brightness</div>
<div class="abs" style="left:1832px;top:225px;width:38.2px;height:25.8px;background:#3a3a3a;border:1px solid #333;border-radius:3px;"></div>
<div class="abs" style="left:1835.00px;top:229.60px;font-size:14px;line-height:18px;color:#fff;white-space:pre;">0</div>
<div class="abs" style="left:1609px;top:259.4px;width:261px;height:6.4px;background:#3d3d3d;border-radius:3px;border:1px solid #4a4a4a;"></div>
<div class="abs" style="left:1735px;top:254.2px;width:10px;height:16.6px;background:#c4c0c4;border-radius:3px;"></div>
<div class="abs" style="left:1609.30px;top:287.30px;font-size:14px;line-height:18px;color:#fff;white-space:pre;letter-spacing:-0.101px;">Constrast</div>
<div class="abs" style="left:1832px;top:282px;width:38.2px;height:25.8px;background:#3a3a3a;border:1px solid #333;border-radius:3px;"></div>
<div class="abs" style="left:1835.00px;top:286.60px;font-size:14px;line-height:18px;color:#fff;white-space:pre;">0</div>
<div class="abs" style="left:1609px;top:316.4px;width:261px;height:6.4px;background:#3d3d3d;border-radius:3px;border:1px solid #4a4a4a;"></div>
<div class="abs" style="left:1735px;top:311.2px;width:10px;height:16.6px;background:#c4c0c4;border-radius:3px;"></div>
<div class="abs" style="left:1609.30px;top:344.30px;font-size:14px;line-height:18px;color:#fff;white-space:pre;letter-spacing:-0.052px;">Saturation</div>
<div class="abs" style="left:1832px;top:339px;width:38.2px;height:25.8px;background:#3a3a3a;border:1px solid #333;border-radius:3px;"></div>
<div class="abs" style="left:1835.00px;top:343.60px;font-size:14px;line-height:18px;color:#fff;white-space:pre;">0</div>
<div class="abs" style="left:1609px;top:373.4px;width:261px;height:6.4px;background:#3d3d3d;border-radius:3px;border:1px solid #4a4a4a;"></div>
<div class="abs" style="left:1735px;top:368.2px;width:10px;height:16.6px;background:#c4c0c4;border-radius:3px;"></div>
<div class="abs" style="left:1598px;top:420px;width:283px;height:1px;background:#3c3c3c;"></div>
<div class="abs" style="left:1682px;top:407px;width:115px;height:30px;background:#2e2e2e;border:1px solid #1f1f1f;border-radius:3px;box-shadow:0 0 0 2px #585858;"></div>
<div class="abs" style="left:1688.30px;top:414.00px;font-size:14px;line-height:18px;color:#fff;white-space:pre;letter-spacing:0.139px;">More options</div>
<svg class="abs" style="left:1775px;top:415px;" width="16" height="14" viewBox="0 0 16 14"><path d="M2.6 4.6 L7.2 7.6 L11.8 4.6" stroke="#b6f1fa" stroke-width="1.3" fill="none" stroke-linecap="round" stroke-linejoin="round"/></svg>
<svg class="abs" style="left:1584px;top:514px;" width="8" height="14" viewBox="0 0 8 14"><path d="M2.2 2.2 L5.6 6.9 L2.2 11.6" stroke="#c6dadc" stroke-width="1.2" stroke-dasharray="1.4 0.7" fill="none"/></svg>
<!-- bottom -->
<div id="bottom"></div>
<div class="abs" style="left:0px;top:1031px;width:1920px;height:1px;background:#4c4c4c;"></div>
<div class="abs" style="left:23px;top:965.2px;width:127px;height:25.6px;background:#3a3a3a;border:1px solid #343434;border-radius:3px;"></div>
<div class="abs" style="left:23px;top:997.2px;width:127px;height:25.5px;background:#3a3a3a;border:1px solid #343434;border-radius:3px;"></div>
<div class="abs" style="left:175.4px;top:965.2px;width:120.4px;height:25.6px;background:#3a3a3a;border:1px solid #343434;border-radius:3px;"></div>
<div class="abs" style="left:175.4px;top:997.2px;width:120.4px;height:25.5px;background:#3a3a3a;border:1px solid #343434;border-radius:3px;"></div>
<div class="abs" style="left:611.3px;top:965.2px;width:96.6px;height:25.6px;background:#3a3a3a;border:1px solid #343434;border-radius:3px;"></div>
<div class="abs" style="left:611.3px;top:997.2px;width:96.6px;height:25.5px;background:#3a3a3a;border:1px solid #343434;border-radius:3px;"></div>
<div class="abs" style="left:9.00px;top:969.80px;font-size:14px;line-height:18px;color:#fff;white-space:pre;">X</div>
<div class="abs" style="left:9.20px;top:1001.80px;font-size:14px;line-height:18px;color:#fff;white-space:pre;">Y</div>
<div class="abs" style="left:155.50px;top:969.80px;font-size:14px;line-height:18px;color:#fff;white-space:pre;">W</div>
<div class="abs" style="left:156.00px;top:1001.80px;font-size:14px;line-height:18px;color:#fff;white-space:pre;">H</div>
<div class="abs" style="left:80.00px;top:969.60px;font-size:14px;line-height:18px;color:#fff;white-space:pre;letter-spacing:-0.001px;">0.401 inch</div>
<div class="abs" style="left:80.00px;top:1001.60px;font-size:14px;line-height:18px;color:#fff;white-space:pre;letter-spacing:-0.001px;">0.505 inch</div>
<div class="abs" style="left:218.10px;top:969.60px;font-size:14px;line-height:18px;color:#fff;white-space:pre;letter-spacing:0.019px;">10.000 inch</div>
<div class="abs" style="left:218.10px;top:1001.60px;font-size:14px;line-height:18px;color:#fff;white-space:pre;letter-spacing:0.019px;">10.721 inch</div>
<div class="abs" style="left:638.10px;top:969.60px;font-size:14px;line-height:18px;color:#fff;white-space:pre;letter-spacing:-0.001px;">0.000 inch</div>
<div class="abs" style="left:638.10px;top:1001.60px;font-size:14px;line-height:18px;color:#fff;white-space:pre;letter-spacing:-0.001px;">0.000 inch</div>
<svg class="abs" style="left:300px;top:960px;" width="320" height="68" viewBox="300 960 320 68"><path d="M309.8 978 V973.6 Q309.8 969.8 314.2 969.8 Q318.6 969.8 318.6 973.6 V978" stroke="#b6f1fa" stroke-width="1.9" fill="none"/><rect x="306" y="977.4" width="16.4" height="9.8" rx="1" fill="#b6f1fa"/><rect x="313.5" y="980.6" width="1.4" height="3.2" rx="0.6" fill="#2f5560"/><rect x="341.8" y="967.2" width="2.9" height="21.8" fill="#8b8b8b"/><rect x="347" y="968.5" width="12.6" height="6.1" fill="#8b8b8b"/><rect x="347.6" y="979.5" width="15.4" height="7.1" fill="none" stroke="#8b8b8b" stroke-width="1.3"/><rect x="391.3" y="967.2" width="2.9" height="21.8" fill="#8b8b8b"/><rect x="376.5" y="968.5" width="12.6" height="6.1" fill="#8b8b8b"/><rect x="372.8" y="979.5" width="15.7" height="7.1" fill="none" stroke="#8b8b8b" stroke-width="1.3"/><rect x="402.2" y="967.2" width="21.9" height="2.6" fill="#8b8b8b"/><rect x="404.1" y="972.3" width="8.2" height="15.8" fill="none" stroke="#8b8b8b" stroke-width="1.3"/><rect x="416.3" y="971.7" width="6.3" height="12.1" fill="#8b8b8b"/><rect x="432" y="986.2" width="22.1" height="2.8" fill="#8b8b8b"/><rect x="434.6" y="968" width="7.6" height="15.2" fill="none" stroke="#8b8b8b" stroke-width="1.3"/><rect x="446.1" y="971.7" width="6.9" height="12.1" fill="#8b8b8b"/><rect x="471.6" y="967.2" width="3" height="21.8" fill="#8b8b8b"/><rect x="465" y="968.5" width="15.8" height="6.1" fill="#8b8b8b"/><rect x="462.7" y="979.5" width="20.6" height="7.1" fill="none" stroke="#8b8b8b" stroke-width="1.3"/><rect x="471.6" y="978" width="3" height="11" fill="#8b8b8b"/><rect x="492.3" y="976.4" width="21.4" height="3.2" fill="#8b8b8b"/><rect x="494.3" y="968" width="7.8" height="20.2" fill="none" stroke="#8b8b8b" stroke-width="1.3"/><rect x="506.3" y="970" width="6.5" height="15.5" fill="#8b8b8b"/><rect x="523.7" y="968.8" width="18.8" height="18.6" rx="4" fill="#3d4f54" stroke="#b6f1fa" stroke-width="1.5"/><rect x="529.9" y="974.9" width="6.4" height="6.4" rx="1.4" fill="none" stroke="#b6f1fa" stroke-width="1.5"/><path d="M523.7 978.1 H529.5 M536.7 978.1 H542.5" stroke="#b6f1fa" stroke-width="1.4"/><rect x="553.7" y="968.8" width="18.8" height="18.6" rx="4" fill="#3d4f54" stroke="#b6f1fa" stroke-width="1.5"/><rect x="559.9" y="974.9" width="6.4" height="6.4" rx="1.4" fill="none" stroke="#b6f1fa" stroke-width="1.5"/><path d="M563.1 968.8 V974.5 M563.1 981.7 V987.4" stroke="#b6f1fa" stroke-width="1.4"/><path d="M581.8 966 V990 M604.4 966 V990" stroke="#8b8b8b" stroke-width="1.2"/><rect x="584.3" y="970" width="6.9" height="16" fill="#8b8b8b"/><rect x="594.6" y="970" width="7.5" height="16" fill="#8b8b8b"/><rect x="311.6" y="1008.5" width="10.8" height="10.2" fill="#525a5c" stroke="#b6f1fa" stroke-width="1.6"/><path d="M309.6 1013.4 A6.2 6.2 0 1 1 316.4 1003.4" stroke="#b6f1fa" stroke-width="1.6" fill="none"/><path d="M314.6 1001.2 L318.6 1005.4 L314.2 1006.2 Z" fill="#b6f1fa"/><rect x="342.4" y="1008.9" width="15.2" height="10.6" rx="1" fill="#525a5c" stroke="#b6f1fa" stroke-width="1.8"/><path d="M362.8 1013.8 A11.5 11.5 0 0 0 351.6 1001.8" stroke="#b6f1fa" stroke-width="1.8" fill="none"/><path d="M348.6 1001.8 L353.6 998 L353.6 1005.6 Z" fill="#b6f1fa"/><rect x="378.8" y="1008.9" width="15.2" height="10.6" rx="1" fill="#525a5c" stroke="#b6f1fa" stroke-width="1.8"/><path d="M372.6 1013.8 A11.5 11.5 0 0 1 383.8 1001.8" stroke="#b6f1fa" stroke-width="1.8" fill="none"/><path d="M386.8 1001.8 L381.8 998 L381.8 1005.6 Z" fill="#b6f1fa"/><path d="M403.2 1019.7 L411.2 1002.6 V1019.7 Z" fill="none" stroke="#b6f1fa" stroke-width="1.3"/><path d="M413.8 1000.4 L424.9 1020.4 H413.8 Z" fill="#b6f1fa"/><path d="M435.4 1008.6 L452.4 1000.6 V1008.6 Z" fill="none" stroke="#b6f1fa" stroke-width="1.3"/><path d="M433.5 1011 H453 V1020.6 Z" fill="#b6f1fa"/><path d="M473 1000.5 L484.2 1006.1 L473 1011.7 L461.8 1006.1 Z" fill="#b6f1fa"/><path d="M462.6 1013 L464 1014.2 L473 1018.8 L482 1014.2 L483.4 1013" stroke="#b6f1fa" stroke-width="1.3" fill="none" stroke-linejoin="round"/><path d="M503 1001 L513.6 1006.1 L503 1011.2 L492.4 1006.1 Z" fill="none" stroke="#b6f1fa" stroke-width="1.3"/><path d="M497 1012 L503 1014.8 L509 1012 L514 1015 L503 1020.4 L492 1015 Z" fill="#b6f1fa"/><rect x="523" y="999.8" width="20" height="12.8" fill="none" stroke="#8b8b8b" stroke-width="1.2"/><path d="M523 1018.5 H543.2 M525 1017 L523 1018.5 L525 1020 M541.2 1017 L543.2 1018.5 L541.2 1020" stroke="#8b8b8b" stroke-width="1" fill="none"/><rect x="560" y="999.8" width="13.2" height="20.4" fill="none" stroke="#8b8b8b" stroke-width="1.2"/><path d="M554.3 999.6 V1020.6 M552.8 1001.6 L554.3 999.6 L555.8 1001.6 M552.8 1018.6 L554.3 1020.6 L555.8 1018.6" stroke="#8b8b8b" stroke-width="1" fill="none"/><path d="M581.2 998.7 H605 M581.2 1021 H605" stroke="#8b8b8b" stroke-width="1.2"/><rect x="584.9" y="1001.3" width="16.3" height="6.7" fill="#8b8b8b"/><rect x="584.9" y="1011.9" width="16.3" height="6.8" fill="#8b8b8b"/></svg>
<!-- taskbar -->
<div id="taskbar"></div>
<svg class="abs" style="left:0px;top:1032px;" width="1920" height="48" viewBox="0 1032 1920 48"><defs><linearGradient id="gw" x1="0" y1="0" x2="1" y2="1"><stop offset="0" stop-color="#5cc8f8"/><stop offset="1" stop-color="#1583dc"/></linearGradient><linearGradient id="gsky" x1="0" y1="0" x2="0" y2="1"><stop offset="0" stop-color="#2f347a"/><stop offset="0.5" stop-color="#9a7fae"/><stop offset="1" stop-color="#ee9248"/></linearGradient><linearGradient id="gtv1" x1="0" y1="0" x2="0" y2="1"><stop offset="0" stop-color="#3a3a3a"/><stop offset="1" stop-color="#0c0c0c"/></linearGradient><linearGradient id="gtv2" x1="0" y1="1" x2="1" y2="0"><stop offset="0" stop-color="#cfcfcf"/><stop offset="1" stop-color="#ffffff"/></linearGradient><linearGradient id="gcp" x1="0.6" y1="0" x2="0.3" y2="1"><stop offset="0" stop-color="#2a72e8"/><stop offset="0.3" stop-color="#2fc0e0"/><stop offset="0.55" stop-color="#70d860"/><stop offset="0.78" stop-color="#f2d832"/><stop offset="1" stop-color="#f07a30"/></linearGradient><linearGradient id="gcp2" x1="0.5" y1="0" x2="0.4" y2="1"><stop offset="0" stop-color="#5a55e6"/><stop offset="0.4" stop-color="#d052dc"/><stop offset="0.75" stop-color="#ff6a8a"/><stop offset="1" stop-color="#f4642c"/></linearGradient><linearGradient id="gfo" x1="0" y1="0" x2="0" y2="1"><stop offset="0" stop-color="#fde26a"/><stop offset="1" stop-color="#f4c236"/></linearGradient><linearGradient id="ged" x1="0" y1="1" x2="1" y2="0"><stop offset="0" stop-color="#0f5cb0"/><stop offset="0.55" stop-color="#2aa4e0"/><stop offset="1" stop-color="#62e888"/></linearGradient><linearGradient id="gst" x1="0" y1="0" x2="0" y2="1"><stop offset="0" stop-color="#1f66b4"/><stop offset="1" stop-color="#0f3a74"/></linearGradient><linearGradient id="gpr" x1="0" y1="0" x2="0" y2="1"><stop offset="0" stop-color="#6a90c8"/><stop offset="1" stop-color="#4cb47c"/></linearGradient></defs><rect x="23.2" y="1044" width="8.6" height="21" rx="4.3" fill="#b4daf8"/><rect x="26.4" y="1047" width="2.2" height="11" fill="#d2436e"/><circle cx="27.5" cy="1060.6" r="3" fill="#2d8de6"/><path d="M33.4 1054.4 H39.4 L36.4 1059.6 Z" fill="#3a6fd8"/><rect x="33.4" y="1061.5" width="6.2" height="2.1" rx="1" fill="#3a6fd8"/><circle cx="38.1" cy="1046" r="8" fill="#d32a20"/><text x="38.1" y="1050" font-size="11" fill="#fff" text-anchor="middle" font-family="Liberation Sans">1</text><rect x="551" y="1044.9" width="11" height="11" fill="url(#gw)"/><rect x="563.2" y="1044.9" width="11" height="11" fill="url(#gw)"/><rect x="551" y="1057.1" width="11" height="11" fill="url(#gw)"/><rect x="563.2" y="1057.1" width="11" height="11" fill="url(#gw)"/><rect x="588" y="1040.3" width="216" height="31.4" rx="15.7" fill="#fafcfd" stroke="#e3e8ec" stroke-width="0.9"/><circle cx="605.2" cy="1055" r="5.1" fill="none" stroke="#222" stroke-width="1.6"/><path d="M608.9 1059 L612.6 1063" stroke="#222" stroke-width="1.8" stroke-linecap="round"/><clipPath id="cpx"><path d="M753 1059 Q753 1056 755 1055.5 V1047 Q757.5 1042.5 760.5 1047 V1049 L771 1043 H786 L796 1049 V1046.5 Q799 1042.5 801 1047 V1055.5 Q803.2 1056 803.2 1059 Q802 1066 795 1068.4 H761 Q754 1066 753 1059 Z"/></clipPath><g clip-path="url(#cpx)"><rect x="752" y="1042" width="53" height="28" fill="url(#gsky)"/><path d="M770 1043 L774 1043 L776 1064 H768 Z M782 1043 L786 1043 L788 1064 H780 Z" fill="#b8a0c8" fill-opacity="0.55"/><rect x="754.6" y="1045" width="6.2" height="16" fill="#30357c"/><rect x="795.8" y="1045" width="6" height="16" fill="#30357c"/><rect x="760.8" y="1049" width="8.4" height="14" fill="#4c4690" fill-opacity="0.9"/><rect x="787" y="1049" width="8.8" height="14" fill="#4c4690" fill-opacity="0.9"/><rect x="752" y="1059.4" width="10.4" height="10" fill="#e89650"/><rect x="794.6" y="1059.4" width="10" height="10" fill="#e89650"/><rect x="755.6" y="1061.4" width="1.6" height="2.4" fill="#ffd890"/><rect x="758.2" y="1061.4" width="1.6" height="2.4" fill="#ffd890"/><rect x="797" y="1061.4" width="1.6" height="2.4" fill="#ffd890"/><rect x="799.6" y="1061.4" width="1.6" height="2.4" fill="#ffd890"/><path d="M778 1046 L781.6 1052 H780.4 L784 1057.6 H782.6 L786.6 1063.4 H785 L788 1068.6 H768 L771 1063.4 H769.4 L773.4 1057.6 H772 L775.6 1052 H774.4 Z" fill="#17694a"/><path d="M778 1047.6 L780.4 1052 L782 1057 L779 1056 L777 1060 L774 1062 L776.4 1052 Z" fill="#2a9a70" fill-opacity="0.8"/><circle cx="778" cy="1045.6" r="1.9" fill="#fff8dc"/><circle cx="775.4" cy="1055.6" r="0.9" fill="#ffe070"/><circle cx="781" cy="1059.6" r="0.9" fill="#60d8ff"/><circle cx="774" cy="1063" r="0.9" fill="#60d8ff"/><circle cx="782.4" cy="1065" r="0.9" fill="#ffe070"/><circle cx="778" cy="1066.4" r="0.9" fill="#ffe070"/></g><rect x="819.2" y="1051.2" width="17.7" height="15.6" rx="1.5" fill="url(#gtv1)"/><rect x="825.4" y="1044.9" width="17.2" height="15.7" rx="1.5" fill="url(#gtv2)"/><path d="M866.6 1047 Q867.4 1044.8 870 1044.7 H878 Q880.8 1044.8 880.9 1047.6 Q878 1051 874.4 1054.8 Q872 1059 870.4 1063.2 Q867.6 1062.6 866 1060.2 Q863 1057.6 863.6 1054 Z" fill="url(#gcp)"/><path d="M876.5 1051.2 H884 Q887.2 1051.6 886.9 1054.6 L884.6 1061.8 Q883 1065.2 879.6 1065.3 H872.6 Q870.6 1064.8 870.3 1063.2 Q871.8 1059 874.4 1056 Z" fill="url(#gcp2)"/><path d="M877.4 1051.4 Q874 1055.4 875.2 1058 Q872.6 1056.4 874.6 1052.6 Z" fill="#fff" fill-opacity="0.85"/><path d="M906.7 1046.4 Q906.7 1044.9 908.2 1044.9 H915.4 L917.6 1047.4 H929.6 Q931.1 1047.4 931.1 1048.9 V1064.3 Q931.1 1065.8 929.6 1065.8 H908.2 Q906.7 1065.8 906.7 1064.3 Z" fill="#e7a71f"/><rect x="906.7" y="1047.6" width="24.4" height="18.2" rx="1.4" fill="url(#gfo)"/><path d="M910.8 1065.8 V1062.2 Q910.8 1060 913 1060 H924.4 Q926.6 1060 926.6 1062.2 V1065.8 Z" fill="#1b84d8"/><rect x="912.8" y="1061.6" width="11.8" height="1.6" rx="0.8" fill="#1463b0"/><circle cx="963.1" cy="1055.8" r="12.1" fill="url(#ged)"/><path d="M955 1060 Q953 1052 961 1049.6 Q969 1048 971.6 1054.4 Q972 1058 968.4 1058.4 Q965 1052.6 960 1055.6 Q957.6 1058.4 961 1063 Q964 1066 969 1064.6 Q964 1068.6 958 1065 Q955.8 1063 955 1060Z" fill="#fff" fill-opacity="0.85"/><path d="M951.4 1058 Q953 1048 963 1047.4 Q957 1051 958 1058 Q960 1066 970 1065.4 Q962 1070.4 955 1065.4 Q952 1062.4 951.4 1058Z" fill="#104f9c" fill-opacity="0.75"/><path d="M1000.8 1049.6 V1047.2 Q1000.8 1044.8 1003.2 1044.8 H1009.8 Q1012.2 1044.8 1012.2 1047.2 V1049.6" fill="none" stroke="#58b4e8" stroke-width="1.6"/><path d="M995.1 1049.1 H1018 V1064.8 Q1018 1067.8 1015 1067.8 H998.1 Q995.1 1067.8 995.1 1064.8 Z" fill="url(#gst)"/><rect x="1002" y="1053.8" width="4.3" height="4.3" fill="#f25022"/><rect x="1007.2" y="1053.8" width="4.3" height="4.3" fill="#7fba00"/><rect x="1002" y="1059" width="4.3" height="4.3" fill="#2ba8f0"/><rect x="1007.2" y="1059" width="4.3" height="4.3" fill="#ffc83a"/><path d="M1046 1051 L1052.6 1045.2 Q1053.6 1044.6 1054.6 1045.2 L1062.4 1050.6 Q1063 1051.2 1063 1052 V1064.8 Q1063 1067 1060.8 1067 H1044 Q1042.4 1066.6 1042 1064.4 Z" fill="#48c4f0"/><path d="M1053.6 1045 L1062.6 1051 L1053.6 1056.6 Z" fill="#0d55b4"/><path d="M1053.6 1056.6 L1063 1051.4 V1064.8 Q1063 1067 1060.8 1067 H1046 Z" fill="#7adcf8"/><rect x="1039" y="1049" width="14.6" height="14.4" rx="1.6" fill="#1271cb"/><circle cx="1046.3" cy="1056.2" r="3.4" fill="none" stroke="#fff" stroke-width="1.7"/><path d="M1094.9 1055.8 L1084.51 1049.80 A12 12 0 0 1 1105.29 1049.80 Z" fill="#ea4335"/><path d="M1094.9 1055.8 L1105.29 1049.80 A12 12 0 0 1 1094.90 1067.80 Z" fill="#fbc116"/><path d="M1094.9 1055.8 L1094.90 1067.80 A12 12 0 0 1 1084.51 1049.80 Z" fill="#34a853"/><circle cx="1094.9" cy="1055.8" r="5.64" fill="#fff"/><circle cx="1094.9" cy="1055.8" r="4.44" fill="#4285f4"/><circle cx="1104" cy="1046.8" r="8" fill="#d1106a"/><text x="1104" y="1050.2" font-size="9.5" font-weight="bold" fill="#fff" text-anchor="middle" font-family="Liberation Sans">C</text><path d="M1138.9 1055.8 L1128.51 1049.80 A12 12 0 0 1 1149.29 1049.80 Z" fill="#ea4335"/><path d="M1138.9 1055.8 L1149.29 1049.80 A12 12 0 0 1 1138.90 1067.80 Z" fill="#fbc116"/><path d="M1138.9 1055.8 L1138.90 1067.80 A12 12 0 0 1 1128.51 1049.80 Z" fill="#34a853"/><circle cx="1138.9" cy="1055.8" r="5.64" fill="#fff"/><circle cx="1138.9" cy="1055.8" r="4.44" fill="#4285f4"/><circle cx="1145.2" cy="1050" r="6" fill="#d24a1a"/><text x="1145.2" y="1052.8" font-size="7.5" font-weight="bold" fill="#ffe" text-anchor="middle" font-family="Liberation Sans">K</text><path d="M1174.4 1047 Q1175.2 1044.9 1177.8 1044.8 H1185.6 Q1188.2 1044.9 1188.4 1047.4 Q1185.4 1050.6 1182 1054.2 Q1179.8 1058 1178.4 1061.6 Q1175.6 1061.2 1174 1059 Q1171 1056.6 1171.6 1053.2 Z" fill="url(#gcp)"/><path d="M1184.4 1050.6 H1192 Q1195.2 1051 1194.9 1054 L1192.8 1060.6 Q1191.2 1063.8 1188 1063.9 H1180.6 Q1178.6 1063.4 1178.4 1061.6 Q1179.8 1058 1182.2 1055 Z" fill="url(#gcp2)"/><path d="M1185.2 1050.8 Q1181.8 1054.6 1183 1057.2 Q1180.4 1055.6 1182.4 1052 Z" fill="#fff" fill-opacity="0.85"/><rect x="1176" y="1061.3" width="19" height="6.6" rx="0.8" fill="#111"/><text x="1185.5" y="1067" font-size="6.6" font-weight="bold" fill="#fff" text-anchor="middle" font-family="Liberation Sans" textLength="16.4" lengthAdjust="spacingAndGlyphs">M365</text><rect x="1215.6" y="1044" width="17.6" height="17.2" rx="2.5" fill="#fbfbfb"/><path d="M1228 1047.4 H1218.4 V1057" stroke="#c4421f" stroke-width="2.6" stroke-dasharray="2.4 1" fill="none"/><path d="M1229.6 1049 V1057 Q1229.6 1058.6 1228 1058.6 H1220.6" stroke="#b8b8b8" stroke-width="1.8" fill="none"/><path d="M1229.6 1058.4 L1234.4 1057.8 M1229.6 1058.4 L1228.8 1063" stroke="#a8a8a8" stroke-width="1.6"/><circle cx="1236.2" cy="1057.5" r="2.2" fill="#e8f6ff" stroke="#2fa6e8" stroke-width="1.3"/><circle cx="1228.4" cy="1065.2" r="2.2" fill="#e8f6ff" stroke="#2fa6e8" stroke-width="1.3"/><path d="M1260 1058 L1266 1054.6 H1275 L1281.5 1051 V1060 L1272 1065.5 L1260 1063 Z" fill="#d9d9dc"/><path d="M1272.5 1051.4 L1281.5 1048.4 V1060.4 L1272.5 1064.4 Z" fill="#ececee"/><path d="M1266.6 1049.2 L1272.5 1051.4 V1056 L1266.6 1054.4 Z" fill="#1e2a24"/><path d="M1268.6 1051 L1271.4 1052 V1054.4 L1268.6 1053.6Z" fill="#52c060"/><path d="M1263.2 1054.8 L1271.6 1056.2 L1271.6 1057.6 L1263.2 1056.2Z" fill="#222"/><rect x="1263" y="1058.8" width="2" height="3" fill="#555"/><rect x="1267.6" y="1059.8" width="2" height="3" fill="#555"/><path d="M1274 1063.4 L1281.5 1059.6 V1060.8 L1274 1064.6Z" fill="#333"/><rect x="1296" y="1037.6" width="37.6" height="37.6" rx="4" fill="#f5f9fc" stroke="#e6eef4" stroke-width="0.8"/><rect x="1303.2" y="1046.2" width="22.4" height="18.4" rx="1.2" fill="#fdfdfe" stroke="#9c9ca4" stroke-width="1"/><rect x="1305.3" y="1050.4" width="8.6" height="11.4" fill="url(#gpr)"/><path d="M1316.4 1051 H1320 M1316.4 1054 H1320 M1316.4 1057 H1320 M1316.4 1061.6 H1320" stroke="#d4d4da" stroke-width="1"/><rect x="1321.8" y="1050.2" width="1" height="5.4" fill="#667"/><path d="M1320 1047.6 H1324" stroke="#889" stroke-width="0.8" stroke-dasharray="1 0.8"/><rect x="1307.4" y="1072.2" width="15.4" height="2.8" rx="1.4" fill="#1a78d0"/><rect x="1347" y="1044" width="24" height="23.8" rx="4.2" fill="#050d16"/><path d="M1350.4 1051.6 V1048.6 H1354.4 M1363.6 1048.6 H1367.6 V1051.6 M1367.6 1057.6 V1060.6 H1363.6 M1354.4 1060.6 H1350.4 V1057.6" stroke="#2f90d0" stroke-width="1.3" fill="none"/><path d="M1356.6 1051.4 L1362.6 1054.8 L1356.6 1058.2 Z" fill="#3aa8f0"/><path d="M1359 1060.6 V1063.6 M1353.6 1064.2 H1364.4" stroke="#2f90d0" stroke-width="1.3"/><circle cx="1366.8" cy="1048.6" r="1.5" fill="#c8484c"/><rect x="916" y="1072" width="6" height="2.6" rx="1.3" fill="#8c9094"/><rect x="960" y="1072" width="6" height="2.6" rx="1.3" fill="#8c9094"/><rect x="1091.9" y="1072" width="6" height="2.6" rx="1.3" fill="#8c9094"/><rect x="1224" y="1072" width="6" height="2.6" rx="1.3" fill="#8c9094"/><rect x="1268" y="1072" width="6" height="2.6" rx="1.3" fill="#8c9094"/><rect x="1356" y="1072" width="6" height="2.6" rx="1.3" fill="#8c9094"/><path d="M1704.6 1058.4 L1709.2 1053.8 L1713.8 1058.4" stroke="#222" stroke-width="1.4" fill="none" stroke-linecap="round" stroke-linejoin="round"/><path d="M1733.4 1055.4 A7.4 7.4 0 0 1 1747.4 1051.6" stroke="#222" stroke-width="1.2" fill="none"/><path d="M1744 1052.2 H1747.8 V1048.4" stroke="#222" stroke-width="1.2" fill="none"/><path d="M1738.6 1063 A7.4 7.4 0 0 1 1734.4 1060" stroke="#222" stroke-width="1.2" fill="none"/><path d="M1737.8 1059.8 H1734.2 V1063.4" stroke="#222" stroke-width="1.2" fill="none"/><circle cx="1744.8" cy="1060" r="4" fill="#1f82e0"/><path d="M1765.6 1054.6 A10.6 10.6 0 0 1 1780.6 1054.6" stroke="#222" stroke-width="1.3" fill="none" stroke-linecap="round"/><path d="M1768 1057.4 A7.2 7.2 0 0 1 1778.2 1057.4" stroke="#222" stroke-width="1.3" fill="none" stroke-linecap="round"/><path d="M1770.4 1060 A3.8 3.8 0 0 1 1775.8 1060" stroke="#222" stroke-width="1.3" fill="none" stroke-linecap="round"/><circle cx="1773.1" cy="1062.2" r="1.1" fill="#222"/><path d="M1789.6 1053.6 H1792.2 L1795.6 1050.6 V1061.4 L1792.2 1058.4 H1789.6 Z" stroke="#222" stroke-width="1.2" fill="none" stroke-linejoin="round"/><path d="M1797.8 1053.4 A3.4 3.4 0 0 1 1797.8 1058.6" stroke="#222" stroke-width="1.2" fill="none" stroke-linecap="round"/><path d="M1799.8 1051.2 A6.2 6.2 0 0 1 1799.8 1060.8" stroke="#222" stroke-width="1.2" fill="none" stroke-linecap="round"/><path d="M1801.8 1049.2 A9 9 0 0 1 1801.8 1062.8" stroke="#bbb" stroke-width="1" fill="none" stroke-linecap="round"/><rect x="1813.6" y="1051.4" width="13.6" height="8.8" rx="1.8" fill="#1a1a1a" stroke="#1a1a1a" stroke-width="1.2"/><rect x="1827.6" y="1054" width="1.6" height="3.6" rx="0.7" fill="#1a1a1a"/><path d="M1816.2 1048.6 L1813 1055.2 H1815.6 L1814.6 1060.4" stroke="#f4f0e6" stroke-width="2.4" fill="none"/><path d="M1816.2 1048.6 L1813.2 1055 H1815.8 L1814.8 1059.4" stroke="#1a1a1a" stroke-width="1.2" fill="none" stroke-linejoin="round"/></svg>
<div class="abs" style="left:51.20px;top:1039.90px;font-size:12px;line-height:16px;color:#1c1c1c;white-space:pre;letter-spacing:0.178px;">Tomorrow's low</div>
<div class="abs" style="left:51.20px;top:1055.90px;font-size:12px;line-height:16px;color:#5e6b74;white-space:pre;letter-spacing:0.067px;">To tie record</div>
<div class="abs" style="left:624.40px;top:1047.20px;font-size:14px;line-height:18px;color:#5f5f5f;white-space:pre;letter-spacing:-0.660px;">Search</div>
<div class="abs" style="left:1857.80px;top:1039.90px;font-size:12px;line-height:16px;color:#1c1c1c;white-space:pre;letter-spacing:-0.299px;">1:26 PM</div>
<div class="abs" style="left:1845.80px;top:1055.80px;font-size:12px;line-height:16px;color:#1c1c1c;white-space:pre;letter-spacing:0.135px;">12/3/2025</div>
</div>
</body></html>
